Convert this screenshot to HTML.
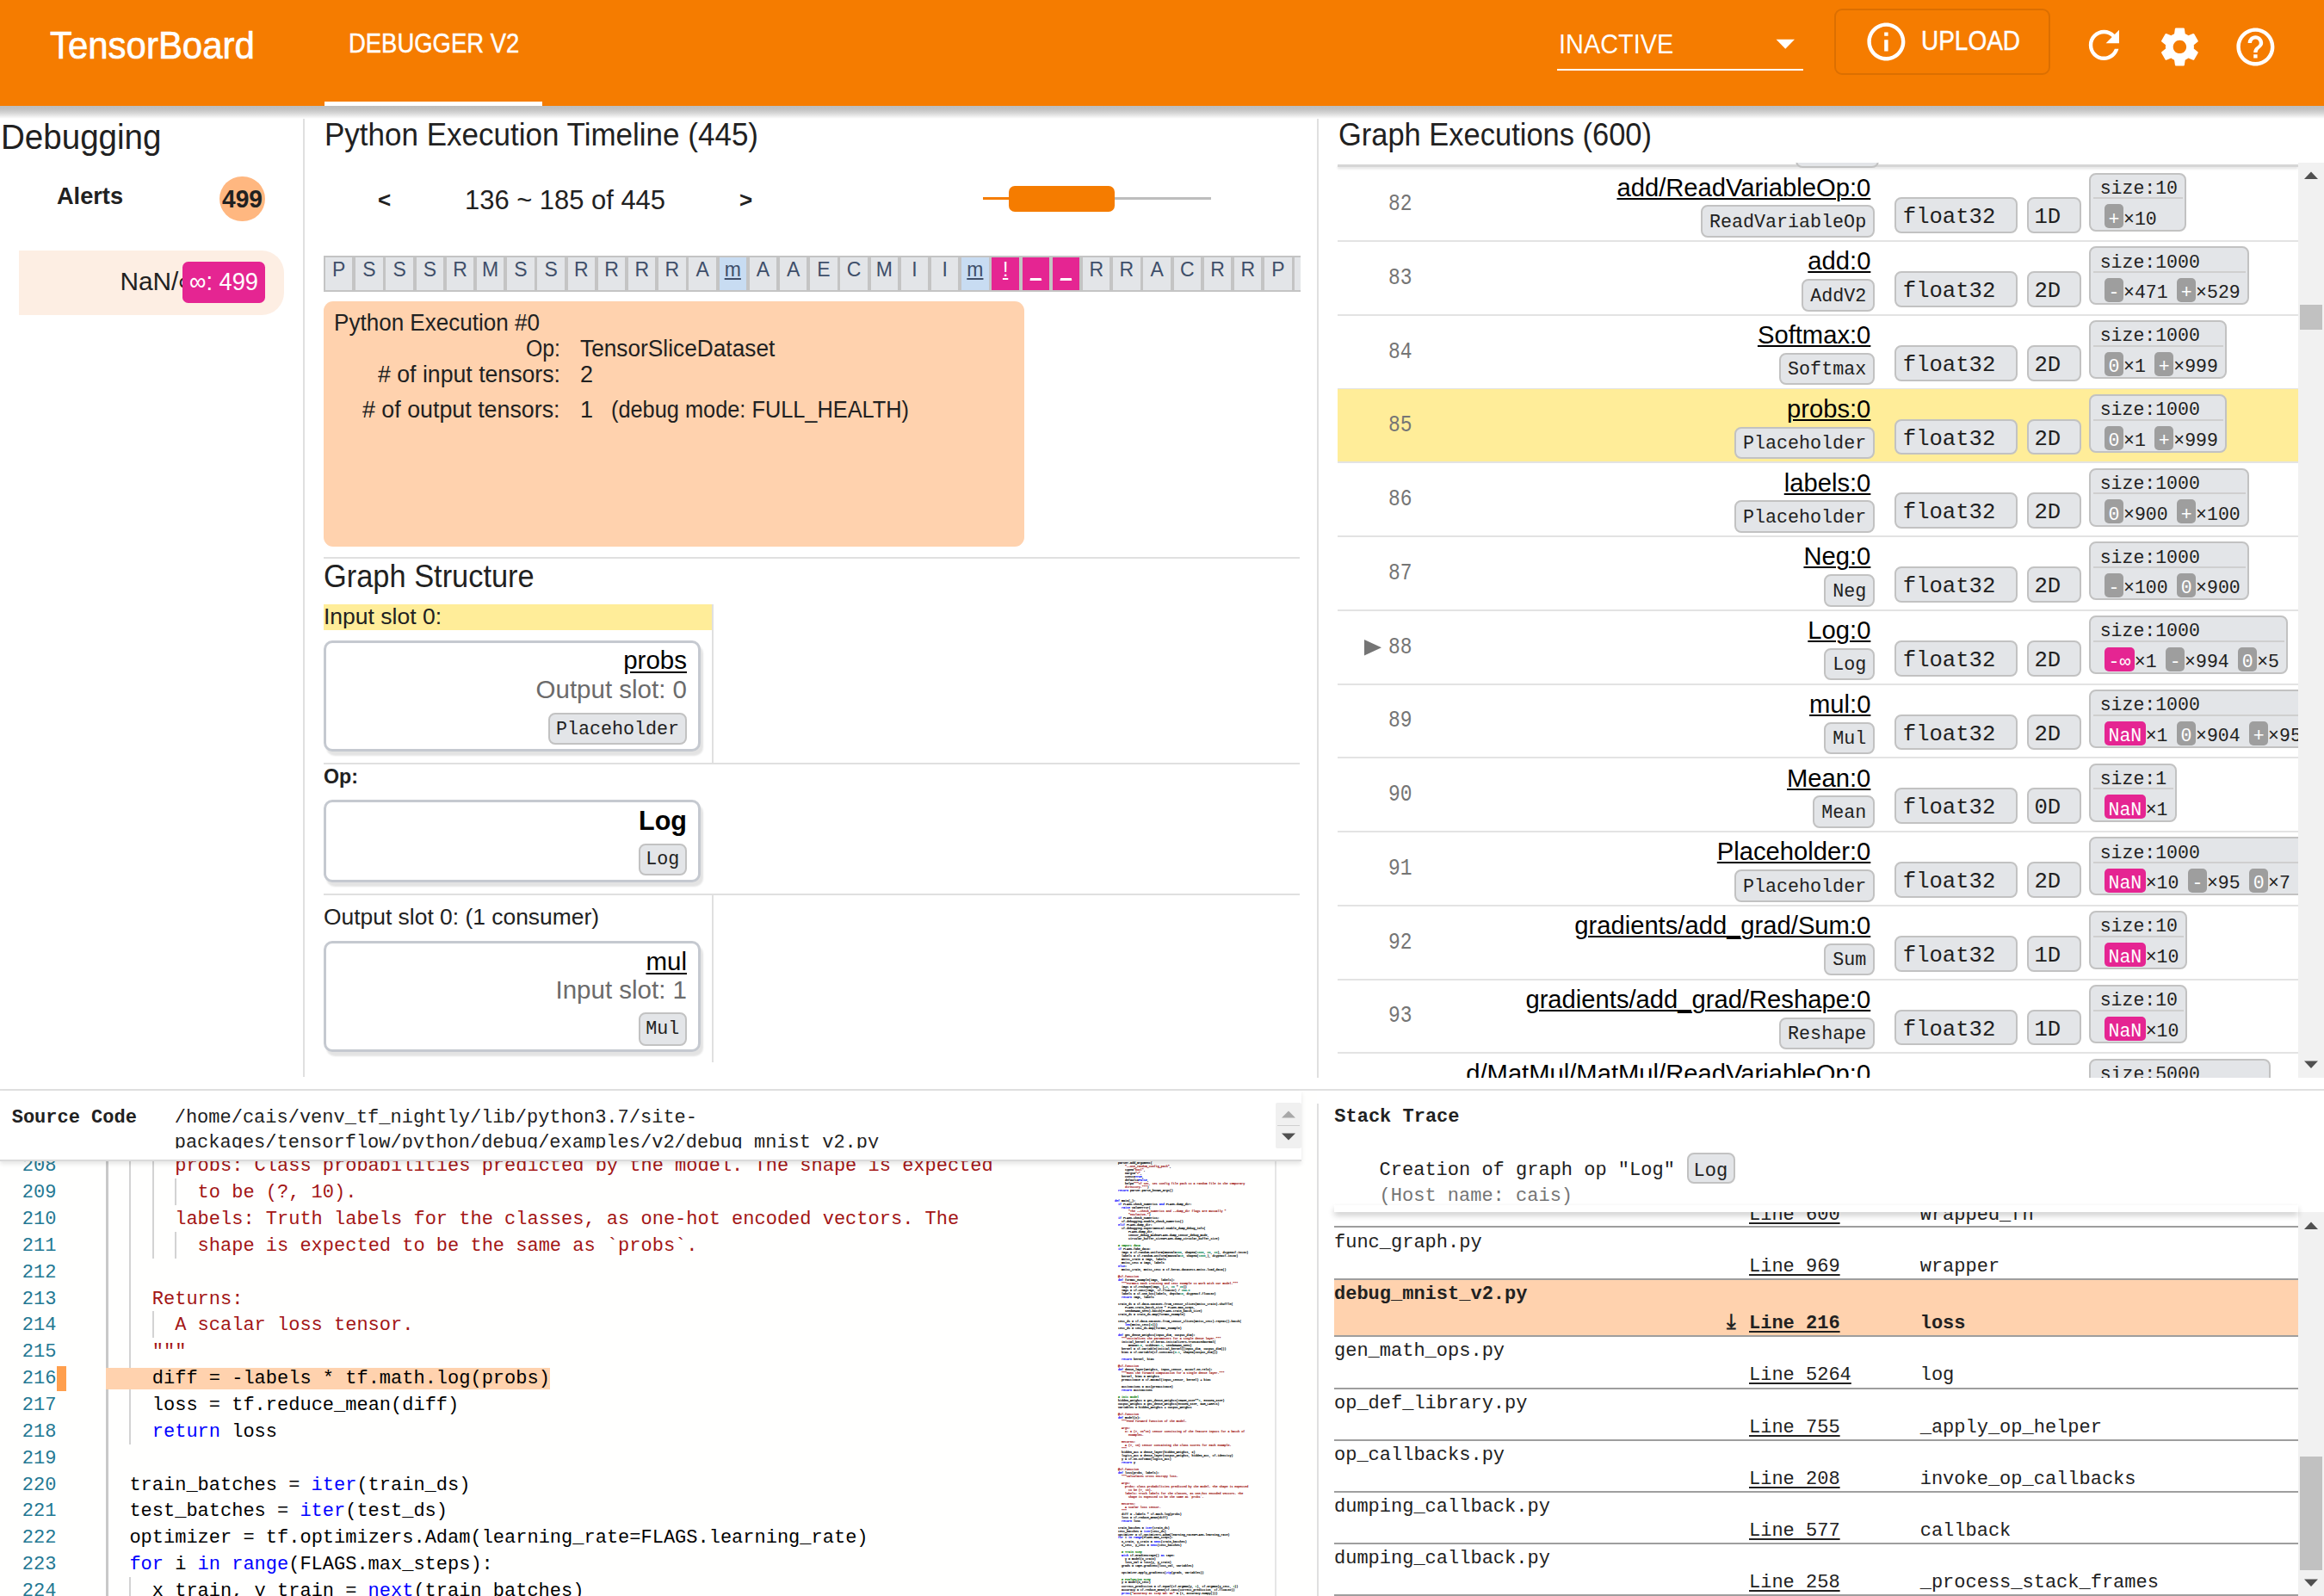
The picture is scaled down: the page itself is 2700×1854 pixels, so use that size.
<!DOCTYPE html><html><head><meta charset="utf-8"><style>
*{box-sizing:content-box}
html,body{margin:0;padding:0}
body{width:2700px;height:1854px;position:relative;overflow:hidden;background:#fff;font-family:"Liberation Sans",sans-serif}
.t{position:absolute;line-height:0;white-space:pre}
</style></head><body><div style="position:absolute;left:0.00px;top:123.00px;width:2700.00px;height:15.00px;background:linear-gradient(#bdbdbd 0%,#c2c2c2 25%,#d6d6d6 55%,#f6f6f6 90%,#fff 100%);z-index:2"></div>
<div style="position:absolute;left:0.00px;top:0.00px;width:2700.00px;height:123.00px;background:#f57c00;z-index:2"></div>
<div style="position:absolute;left:0;top:0;width:2700px;height:123px;z-index:3">
<div class="t" style="left:57.90px;top:51.57px;font-size:44.8px;font-family:'Liberation Sans',sans-serif;font-weight:400;color:#fff;transform:scaleX(0.9362);transform-origin:0 0;-webkit-text-stroke:0.7px #fff;">TensorBoard</div>
<div class="t" style="left:404.60px;top:51.28px;font-size:31.2px;font-family:'Liberation Sans',sans-serif;font-weight:400;color:#fff;transform:scaleX(0.8798);transform-origin:0 0;-webkit-text-stroke:0.45px #fff;">DEBUGGER V2</div>
<div style="position:absolute;left:377.00px;top:118.00px;width:253.00px;height:5.00px;background:#fff;"></div>
<div class="t" style="left:1810.70px;top:51.08px;font-size:31.5px;font-family:'Liberation Sans',sans-serif;font-weight:400;color:#fff;transform:scaleX(0.9169);transform-origin:0 0;">INACTIVE</div>
<svg style="position:absolute;left:2063px;top:45px" width="24" height="13"><polygon points="0.5,0.8 22,0.8 11.25,11.8" fill="#fff"/></svg>
<div style="position:absolute;left:1809.00px;top:80.00px;width:286.00px;height:2.00px;background:#fff;"></div>
<div style="position:absolute;left:2130.5px;top:10.3px;width:247.7px;height:73px;border:2px solid rgba(0,0,0,.1);border-radius:9px"></div>
<svg style="position:absolute;left:2164.60px;top:21.90px" width="52.8" height="52.8" viewBox="0 0 24 24"><path fill="#fff" d="M11 7h2v2h-2zm0 4h2v6h-2zm1-9C6.48 2 2 6.48 2 12s4.48 10 10 10 10-4.48 10-10S17.52 2 12 2zm0 18c-4.41 0-8-3.59-8-8s3.59-8 8-8 8 3.59 8 8-3.59 8-8 8z"/></svg>
<div class="t" style="left:2231.70px;top:48.15px;font-size:31px;font-family:'Liberation Sans',sans-serif;font-weight:400;color:#fff;transform:scaleX(0.9021);transform-origin:0 0;-webkit-text-stroke:0.45px #fff;">UPLOAD</div>
<svg style="position:absolute;left:2418.30px;top:26.20px" width="52.8" height="52.8" viewBox="0 0 24 24"><path fill="#fff" d="M17.65 6.35C16.2 4.9 14.21 4 12 4c-4.42 0-7.99 3.58-7.99 8s3.57 8 7.99 8c3.73 0 6.84-2.55 7.73-6h-2.08c-.82 2.33-3.04 4-5.65 4-3.31 0-6-2.69-6-6s2.69-6 6-6c1.66 0 3.14.69 4.22 1.78L13 11h7V4l-2.35 2.35z"/></svg>
<svg style="position:absolute;left:2506.10px;top:27.80px" width="52.8" height="52.8" viewBox="0 0 24 24"><path fill="#fff" d="M19.43 12.98c.04-.32.07-.64.07-.98s-.03-.66-.07-.98l2.11-1.65c.19-.15.24-.42.12-.64l-2-3.46c-.12-.22-.39-.3-.61-.22l-2.49 1c-.52-.4-1.08-.73-1.69-.98l-.38-2.65C14.46 2.18 14.25 2 14 2h-4c-.25 0-.46.18-.49.42l-.38 2.65c-.61.25-1.17.59-1.69.98l-2.49-1c-.23-.09-.49 0-.61.22l-2 3.46c-.13.22-.07.49.12.64l2.11 1.65c-.04.32-.07.65-.07.98s.03.66.07.98l-2.11 1.65c-.19.15-.24.42-.12.64l2 3.46c.12.22.39.3.61.22l2.49-1c.52.4 1.08.73 1.69.98l.38 2.65c.03.24.24.42.49.42h4c.25 0 .46-.18.49-.42l.38-2.65c.61-.25 1.17-.59 1.69-.98l2.49 1c.23.09.49 0 .61-.22l2-3.46c.12-.22.07-.49-.12-.64l-2.11-1.65zM12 15.5c-1.93 0-3.5-1.57-3.5-3.5s1.57-3.5 3.5-3.5 3.5 1.57 3.5 3.5-1.57 3.5-3.5 3.5z"/></svg>
<svg style="position:absolute;left:2593.90px;top:27.80px" width="52.8" height="52.8" viewBox="0 0 24 24"><path fill="#fff" d="M11 18h2v-2h-2v2zm1-16C6.48 2 2 6.48 2 12s4.48 10 10 10 10-4.48 10-10S17.52 2 12 2zm0 18c-4.41 0-8-3.59-8-8s3.59-8 8-8 8 3.59 8 8-3.59 8-8 8zm0-14c-2.21 0-4 1.79-4 4h2c0-1.1.9-2 2-2s2 .9 2 2c0 2-3 1.75-3 5h2c0-2.25 3-2.5 3-5 0-2.21-1.79-4-4-4z"/></svg>
</div>
<div style="position:absolute;left:352.00px;top:136.00px;width:2.00px;height:1115.00px;background:#e0e0e0;"></div>
<div style="position:absolute;left:1530.00px;top:136.00px;width:2.00px;height:1115.50px;background:#e0e0e0;"></div>
<div style="position:absolute;left:0.00px;top:1265.00px;width:2700.00px;height:2.00px;background:#e0e0e0;"></div>
<div style="position:absolute;left:1530.00px;top:1281.50px;width:2.00px;height:572.50px;background:#e0e0e0;"></div>
<div class="t" style="left:0.80px;top:159.33px;font-size:40px;font-family:'Liberation Sans',sans-serif;font-weight:400;color:#212121;transform:scaleX(0.9638);transform-origin:0 0;">Debugging</div>
<div class="t" style="left:65.80px;top:228.06px;font-size:27.8px;font-family:'Liberation Sans',sans-serif;font-weight:700;color:#212121;transform:scaleX(0.9772);transform-origin:0 0;">Alerts</div>
<div style="position:absolute;left:255.3px;top:204.7px;width:52.6px;height:52.6px;border-radius:50%;background:#ffb780"></div>
<div class="t" style="left:258.10px;top:230.95px;font-size:29px;font-family:'Liberation Sans',sans-serif;font-weight:700;color:#212121;transform:scaleX(0.9714);transform-origin:0 0;">499</div>
<div style="position:absolute;left:22.00px;top:291.00px;width:308.00px;height:74.60px;background:#fdeee3;border-radius:0 26px 26px 0"></div>
<div class="t" style="left:139.50px;top:327.17px;font-size:29.8px;font-family:'Liberation Sans',sans-serif;font-weight:400;color:#212121;">NaN/∞</div>
<div style="position:absolute;left:212.00px;top:304.00px;width:96.00px;height:47.60px;background:#e52592;border-radius:6.6px"></div>
<div class="t" style="left:220.00px;top:327.17px;font-size:29.8px;font-family:'Liberation Sans',sans-serif;font-weight:400;color:#fff;transform:scaleX(0.9140);transform-origin:0 0;">∞: 499</div>
<div class="t" style="left:376.50px;top:156.72px;font-size:36px;font-family:'Liberation Sans',sans-serif;font-weight:400;color:#212121;transform:scaleX(0.9725);transform-origin:0 0;">Python Execution Timeline (445)</div>
<div class="t" style="left:439.00px;top:231.59px;font-size:26px;font-family:'Liberation Sans',sans-serif;font-weight:700;color:#212121;">&lt;</div>
<div class="t" style="left:540.00px;top:232.03px;font-size:30.5px;font-family:'Liberation Sans',sans-serif;font-weight:400;color:#212121;transform:scaleX(1.0139);transform-origin:0 0;">136 ~ 185 of 445</div>
<div class="t" style="left:859.00px;top:231.59px;font-size:26px;font-family:'Liberation Sans',sans-serif;font-weight:700;color:#212121;">&gt;</div>
<div style="position:absolute;left:1142.00px;top:229.20px;width:265.00px;height:3.20px;background:#bdbdbd;"></div>
<div style="position:absolute;left:1142.00px;top:229.20px;width:33.00px;height:3.20px;background:#f57c00;"></div>
<div style="position:absolute;left:1172.00px;top:215.75px;width:122.50px;height:30.00px;background:#f57c00;border-radius:7px"></div>
<div style="position:absolute;left:376px;top:297px;width:1135px;height:42px;overflow:hidden;background:#c4c4c4">
<div style="position:absolute;left:1.90px;top:1.9px;width:31.6px;height:38px;background:#e3e5e8"></div>
<div class="t" style="left:1.90px;width:31.6px;text-align:center;top:16.03px;font-size:23px;color:#3f4f6a;">P</div>
<div style="position:absolute;left:37.10px;top:1.9px;width:31.6px;height:38px;background:#e3e5e8"></div>
<div class="t" style="left:37.10px;width:31.6px;text-align:center;top:16.03px;font-size:23px;color:#3f4f6a;">S</div>
<div style="position:absolute;left:72.30px;top:1.9px;width:31.6px;height:38px;background:#e3e5e8"></div>
<div class="t" style="left:72.30px;width:31.6px;text-align:center;top:16.03px;font-size:23px;color:#3f4f6a;">S</div>
<div style="position:absolute;left:107.50px;top:1.9px;width:31.6px;height:38px;background:#e3e5e8"></div>
<div class="t" style="left:107.50px;width:31.6px;text-align:center;top:16.03px;font-size:23px;color:#3f4f6a;">S</div>
<div style="position:absolute;left:142.70px;top:1.9px;width:31.6px;height:38px;background:#e3e5e8"></div>
<div class="t" style="left:142.70px;width:31.6px;text-align:center;top:16.03px;font-size:23px;color:#3f4f6a;">R</div>
<div style="position:absolute;left:177.90px;top:1.9px;width:31.6px;height:38px;background:#e3e5e8"></div>
<div class="t" style="left:177.90px;width:31.6px;text-align:center;top:16.03px;font-size:23px;color:#3f4f6a;">M</div>
<div style="position:absolute;left:213.10px;top:1.9px;width:31.6px;height:38px;background:#e3e5e8"></div>
<div class="t" style="left:213.10px;width:31.6px;text-align:center;top:16.03px;font-size:23px;color:#3f4f6a;">S</div>
<div style="position:absolute;left:248.30px;top:1.9px;width:31.6px;height:38px;background:#e3e5e8"></div>
<div class="t" style="left:248.30px;width:31.6px;text-align:center;top:16.03px;font-size:23px;color:#3f4f6a;">S</div>
<div style="position:absolute;left:283.50px;top:1.9px;width:31.6px;height:38px;background:#e3e5e8"></div>
<div class="t" style="left:283.50px;width:31.6px;text-align:center;top:16.03px;font-size:23px;color:#3f4f6a;">R</div>
<div style="position:absolute;left:318.70px;top:1.9px;width:31.6px;height:38px;background:#e3e5e8"></div>
<div class="t" style="left:318.70px;width:31.6px;text-align:center;top:16.03px;font-size:23px;color:#3f4f6a;">R</div>
<div style="position:absolute;left:353.90px;top:1.9px;width:31.6px;height:38px;background:#e3e5e8"></div>
<div class="t" style="left:353.90px;width:31.6px;text-align:center;top:16.03px;font-size:23px;color:#3f4f6a;">R</div>
<div style="position:absolute;left:389.10px;top:1.9px;width:31.6px;height:38px;background:#e3e5e8"></div>
<div class="t" style="left:389.10px;width:31.6px;text-align:center;top:16.03px;font-size:23px;color:#3f4f6a;">R</div>
<div style="position:absolute;left:424.30px;top:1.9px;width:31.6px;height:38px;background:#e3e5e8"></div>
<div class="t" style="left:424.30px;width:31.6px;text-align:center;top:16.03px;font-size:23px;color:#3f4f6a;">A</div>
<div style="position:absolute;left:459.50px;top:1.9px;width:31.6px;height:38px;background:#c8dcf2"></div>
<div class="t" style="left:459.50px;width:31.6px;text-align:center;top:16.03px;font-size:23px;color:#3f4f6a;text-decoration:underline;">m</div>
<div style="position:absolute;left:494.70px;top:1.9px;width:31.6px;height:38px;background:#e3e5e8"></div>
<div class="t" style="left:494.70px;width:31.6px;text-align:center;top:16.03px;font-size:23px;color:#3f4f6a;">A</div>
<div style="position:absolute;left:529.90px;top:1.9px;width:31.6px;height:38px;background:#e3e5e8"></div>
<div class="t" style="left:529.90px;width:31.6px;text-align:center;top:16.03px;font-size:23px;color:#3f4f6a;">A</div>
<div style="position:absolute;left:565.10px;top:1.9px;width:31.6px;height:38px;background:#e3e5e8"></div>
<div class="t" style="left:565.10px;width:31.6px;text-align:center;top:16.03px;font-size:23px;color:#3f4f6a;">E</div>
<div style="position:absolute;left:600.30px;top:1.9px;width:31.6px;height:38px;background:#e3e5e8"></div>
<div class="t" style="left:600.30px;width:31.6px;text-align:center;top:16.03px;font-size:23px;color:#3f4f6a;">C</div>
<div style="position:absolute;left:635.50px;top:1.9px;width:31.6px;height:38px;background:#e3e5e8"></div>
<div class="t" style="left:635.50px;width:31.6px;text-align:center;top:16.03px;font-size:23px;color:#3f4f6a;">M</div>
<div style="position:absolute;left:670.70px;top:1.9px;width:31.6px;height:38px;background:#e3e5e8"></div>
<div class="t" style="left:670.70px;width:31.6px;text-align:center;top:16.03px;font-size:23px;color:#3f4f6a;">I</div>
<div style="position:absolute;left:705.90px;top:1.9px;width:31.6px;height:38px;background:#e3e5e8"></div>
<div class="t" style="left:705.90px;width:31.6px;text-align:center;top:16.03px;font-size:23px;color:#3f4f6a;">I</div>
<div style="position:absolute;left:741.10px;top:1.9px;width:31.6px;height:38px;background:#c8dcf2"></div>
<div class="t" style="left:741.10px;width:31.6px;text-align:center;top:16.03px;font-size:23px;color:#3f4f6a;text-decoration:underline;">m</div>
<div style="position:absolute;left:776.30px;top:1.9px;width:31.6px;height:38px;background:#e52592"></div>
<div class="t" style="left:776.30px;width:31.6px;text-align:center;top:16.03px;font-size:23px;color:#fff;text-decoration:underline;">!</div>
<div style="position:absolute;left:811.50px;top:1.9px;width:31.6px;height:38px;background:#e52592"></div>
<div class="t" style="left:811.50px;width:31.6px;text-align:center;top:16.03px;font-size:23px;color:#fff;text-decoration:underline;">_</div>
<div style="position:absolute;left:846.70px;top:1.9px;width:31.6px;height:38px;background:#e52592"></div>
<div class="t" style="left:846.70px;width:31.6px;text-align:center;top:16.03px;font-size:23px;color:#fff;text-decoration:underline;">_</div>
<div style="position:absolute;left:881.90px;top:1.9px;width:31.6px;height:38px;background:#e3e5e8"></div>
<div class="t" style="left:881.90px;width:31.6px;text-align:center;top:16.03px;font-size:23px;color:#3f4f6a;">R</div>
<div style="position:absolute;left:917.10px;top:1.9px;width:31.6px;height:38px;background:#e3e5e8"></div>
<div class="t" style="left:917.10px;width:31.6px;text-align:center;top:16.03px;font-size:23px;color:#3f4f6a;">R</div>
<div style="position:absolute;left:952.30px;top:1.9px;width:31.6px;height:38px;background:#e3e5e8"></div>
<div class="t" style="left:952.30px;width:31.6px;text-align:center;top:16.03px;font-size:23px;color:#3f4f6a;">A</div>
<div style="position:absolute;left:987.50px;top:1.9px;width:31.6px;height:38px;background:#e3e5e8"></div>
<div class="t" style="left:987.50px;width:31.6px;text-align:center;top:16.03px;font-size:23px;color:#3f4f6a;">C</div>
<div style="position:absolute;left:1022.70px;top:1.9px;width:31.6px;height:38px;background:#e3e5e8"></div>
<div class="t" style="left:1022.70px;width:31.6px;text-align:center;top:16.03px;font-size:23px;color:#3f4f6a;">R</div>
<div style="position:absolute;left:1057.90px;top:1.9px;width:31.6px;height:38px;background:#e3e5e8"></div>
<div class="t" style="left:1057.90px;width:31.6px;text-align:center;top:16.03px;font-size:23px;color:#3f4f6a;">R</div>
<div style="position:absolute;left:1093.10px;top:1.9px;width:31.6px;height:38px;background:#e3e5e8"></div>
<div class="t" style="left:1093.10px;width:31.6px;text-align:center;top:16.03px;font-size:23px;color:#3f4f6a;">P</div>
<div style="position:absolute;left:1128.30px;top:1.9px;width:31.6px;height:38px;background:#e3e5e8"></div>
<div class="t" style="left:1128.30px;width:31.6px;text-align:center;top:16.03px;font-size:23px;color:#3f4f6a;">R</div>
</div>
<div style="position:absolute;left:376.00px;top:350.00px;width:814.00px;height:285.00px;background:#ffd2ae;border-radius:11px"></div>
<div class="t" style="left:388.00px;top:375.04px;font-size:27px;font-family:'Liberation Sans',sans-serif;font-weight:400;color:#212121;transform:scaleX(0.9650);transform-origin:0 0;">Python Execution #0</div>
<div class="t" style="left:610.50px;top:404.64px;font-size:27px;font-family:'Liberation Sans',sans-serif;font-weight:400;color:#212121;transform:scaleX(0.9191);transform-origin:0 0;">Op:</div>
<div class="t" style="left:674.00px;top:404.64px;font-size:27px;font-family:'Liberation Sans',sans-serif;font-weight:400;color:#212121;transform:scaleX(0.9729);transform-origin:0 0;">TensorSliceDataset</div>
<div class="t" style="left:438.50px;top:434.64px;font-size:27px;font-family:'Liberation Sans',sans-serif;font-weight:400;color:#212121;transform:scaleX(0.9877);transform-origin:0 0;"># of input tensors:</div>
<div class="t" style="left:674.00px;top:434.64px;font-size:27px;font-family:'Liberation Sans',sans-serif;font-weight:400;color:#212121;">2</div>
<div class="t" style="left:421.00px;top:475.64px;font-size:27px;font-family:'Liberation Sans',sans-serif;font-weight:400;color:#212121;transform:scaleX(0.9929);transform-origin:0 0;"># of output tensors:</div>
<div class="t" style="left:674.00px;top:475.64px;font-size:27px;font-family:'Liberation Sans',sans-serif;font-weight:400;color:#212121;">1</div>
<div class="t" style="left:710.00px;top:475.64px;font-size:27px;font-family:'Liberation Sans',sans-serif;font-weight:400;color:#212121;transform:scaleX(0.9385);transform-origin:0 0;">(debug mode: FULL_HEALTH)</div>
<div style="position:absolute;left:376.00px;top:647.00px;width:1134.00px;height:2.00px;background:#e0e0e0;"></div>
<div class="t" style="left:376.00px;top:670.41px;font-size:36.3px;font-family:'Liberation Sans',sans-serif;font-weight:400;color:#212121;transform:scaleX(0.9475);transform-origin:0 0;">Graph Structure</div>
<div style="position:absolute;left:376.00px;top:702.00px;width:451.00px;height:29.60px;background:#ffed99;"></div>
<div class="t" style="left:376.00px;top:715.99px;font-size:26px;font-family:'Liberation Sans',sans-serif;font-weight:400;color:#212121;transform:scaleX(1.0192);transform-origin:0 0;">Input slot 0:</div>
<div style="position:absolute;left:827.00px;top:702.00px;width:2.00px;height:185.00px;background:#e0e0e0;"></div>
<div style="position:absolute;left:376px;top:743.6px;width:432px;height:123.4px;border:3.5px solid #c5c9d0;border-radius:10px;background:#fff;box-shadow:3px 5px 2px rgba(0,0,0,.11)"></div>
<div class="t" style="left:724.21px;top:766.77px;font-size:29.5px;font-family:'Liberation Sans',sans-serif;font-weight:400;color:#000;text-decoration:underline;text-underline-offset:3px;">probs</div>
<div class="t" style="left:622.54px;top:801.37px;font-size:29.5px;font-family:'Liberation Sans',sans-serif;font-weight:400;color:#6b6b6b;">Output slot: 0</div>
<div style="position:absolute;left:637.00px;top:828.00px;width:157.00px;height:33.00px;background:#e3e5e8;border:2px solid #c2c2c2;border-radius:8px"></div>
<div class="t" style="left:645.88px;top:848.23px;font-size:21.7px;font-family:'Liberation Mono',monospace;font-weight:400;color:#212121;">Placeholder</div>
<div style="position:absolute;left:376.00px;top:886.00px;width:1134.00px;height:2.00px;background:#e0e0e0;"></div>
<div class="t" style="left:376.00px;top:902.31px;font-size:24.5px;font-family:'Liberation Sans',sans-serif;font-weight:700;color:#212121;transform:scaleX(0.9483);transform-origin:0 0;">Op:</div>
<div style="position:absolute;left:376px;top:929px;width:432px;height:89.8px;border:3.5px solid #c5c9d0;border-radius:10px;background:#fff;box-shadow:3px 5px 2px rgba(0,0,0,.11)"></div>
<div class="t" style="left:742.11px;top:953.43px;font-size:30.5px;font-family:'Liberation Sans',sans-serif;font-weight:700;color:#000;">Log</div>
<div style="position:absolute;left:741.70px;top:979.50px;width:52.30px;height:33.50px;background:#e3e5e8;border:2px solid #c2c2c2;border-radius:8px"></div>
<div class="t" style="left:750.32px;top:999.23px;font-size:21.7px;font-family:'Liberation Mono',monospace;font-weight:400;color:#212121;">Log</div>
<div style="position:absolute;left:376.00px;top:1038.00px;width:1134.00px;height:2.00px;background:#e0e0e0;"></div>
<div class="t" style="left:376.00px;top:1064.81px;font-size:26.5px;font-family:'Liberation Sans',sans-serif;font-weight:400;color:#212121;transform:scaleX(0.9966);transform-origin:0 0;">Output slot 0: (1 consumer)</div>
<div style="position:absolute;left:827.00px;top:1040.00px;width:2.00px;height:194.00px;background:#e0e0e0;"></div>
<div style="position:absolute;left:376px;top:1092.5px;width:432px;height:123.1px;border:3.5px solid #c5c9d0;border-radius:10px;background:#fff;box-shadow:3px 5px 2px rgba(0,0,0,.11)"></div>
<div class="t" style="left:750.47px;top:1116.77px;font-size:29.5px;font-family:'Liberation Sans',sans-serif;font-weight:400;color:#000;text-decoration:underline;text-underline-offset:3px;">mul</div>
<div class="t" style="left:645.49px;top:1150.47px;font-size:29.5px;font-family:'Liberation Sans',sans-serif;font-weight:400;color:#6b6b6b;">Input slot: 1</div>
<div style="position:absolute;left:741.70px;top:1176.00px;width:52.30px;height:34.50px;background:#e3e5e8;border:2px solid #c2c2c2;border-radius:8px"></div>
<div class="t" style="left:750.32px;top:1196.23px;font-size:21.7px;font-family:'Liberation Mono',monospace;font-weight:400;color:#212121;">Mul</div>
<div class="t" style="left:1554.50px;top:156.72px;font-size:36px;font-family:'Liberation Sans',sans-serif;font-weight:400;color:#212121;transform:scaleX(0.9574);transform-origin:0 0;">Graph Executions (600)</div>
<div style="position:absolute;left:1532px;top:189px;width:1138px;height:1063px;overflow:hidden">
<div style="position:absolute;left:21.50px;top:1.50px;width:1116.50px;height:3.00px;background:#d6d6d6;box-shadow:0 2px 3px rgba(0,0,0,.12)"></div>
<div style="position:absolute;left:554.00px;top:-39.00px;width:92.50px;height:41.00px;background:#e3e5e8;border:2px solid #c2c2c2;border-radius:8px"></div>
<div style="position:absolute;left:21.50px;top:90.00px;width:1116.50px;height:2.00px;background:#e3e3e3;"></div>
<div class="t" style="left:81.00px;top:48.07px;font-size:27px;font-family:'Liberation Mono',monospace;font-weight:400;color:#757575;transform:scaleX(0.8486);transform-origin:0 0;">82</div>
<div style="position:absolute;left:171px;top:5.25px;width:477px;height:85.75px;overflow:hidden">
<div class="t" style="left:175.49px;top:23.48px;font-size:29.2px;font-family:'Liberation Sans',sans-serif;font-weight:400;color:#000;text-decoration:underline;text-decoration-thickness:2px;text-underline-offset:2px;">add/ReadVariableOp:0</div>
</div>
<div style="position:absolute;left:443.69px;top:49.25px;width:198.81px;height:33.50px;background:#e3e5e8;border:2px solid #c2c2c2;border-radius:8px"></div>
<div class="t" style="left:453.94px;top:69.98px;font-size:21.7px;font-family:'Liberation Mono',monospace;font-weight:400;color:#212121;">ReadVariableOp</div>
<div style="position:absolute;left:669.40px;top:40.45px;width:138.90px;height:37.70px;background:#e3e5e8;border:2px solid #c2c2c2;border-radius:8px"></div>
<div class="t" style="left:678.80px;top:64.44px;font-size:25.6px;font-family:'Liberation Mono',monospace;font-weight:400;color:#212121;">float32</div>
<div style="position:absolute;left:822.60px;top:40.45px;width:59.60px;height:37.70px;background:#e3e5e8;border:2px solid #c2c2c2;border-radius:8px"></div>
<div class="t" style="left:831.40px;top:64.44px;font-size:25.6px;font-family:'Liberation Mono',monospace;font-weight:400;color:#212121;">1D</div>
<div style="position:absolute;left:895.40px;top:11.50px;width:112.61px;height:68.00px;background:#e3e5e8;border:2px solid #c2c2c2;border-radius:8px;box-sizing:border-box"></div>
<div class="t" style="left:907.70px;top:29.78px;font-size:21.5px;font-family:'Liberation Mono',monospace;font-weight:400;color:#212121;">size:10</div>
<div style="position:absolute;left:900.00px;top:40.25px;width:104.01px;height:2.00px;background:#cfcfcf;"></div>
<div style="position:absolute;left:913.00px;top:48.25px;width:22.00px;height:28.00px;background:#9e9e9e;border-radius:5px"></div>
<div class="t" style="left:917.55px;top:65.53px;font-size:21.5px;font-family:'Liberation Mono',monospace;font-weight:400;color:#fff;">+</div>
<div class="t" style="left:935.00px;top:65.53px;font-size:21.5px;font-family:'Liberation Mono',monospace;font-weight:400;color:#212121;">×10</div>
<div style="position:absolute;left:21.50px;top:175.75px;width:1116.50px;height:2.00px;background:#e3e3e3;"></div>
<div class="t" style="left:81.00px;top:133.82px;font-size:27px;font-family:'Liberation Mono',monospace;font-weight:400;color:#757575;transform:scaleX(0.8486);transform-origin:0 0;">83</div>
<div style="position:absolute;left:171px;top:91.00px;width:477px;height:85.75px;overflow:hidden">
<div class="t" style="left:397.33px;top:23.48px;font-size:29.2px;font-family:'Liberation Sans',sans-serif;font-weight:400;color:#000;text-decoration:underline;text-decoration-thickness:2px;text-underline-offset:2px;">add:0</div>
</div>
<div style="position:absolute;left:560.89px;top:135.00px;width:81.61px;height:33.50px;background:#e3e5e8;border:2px solid #c2c2c2;border-radius:8px"></div>
<div class="t" style="left:571.14px;top:155.73px;font-size:21.7px;font-family:'Liberation Mono',monospace;font-weight:400;color:#212121;">AddV2</div>
<div style="position:absolute;left:669.40px;top:126.20px;width:138.90px;height:37.70px;background:#e3e5e8;border:2px solid #c2c2c2;border-radius:8px"></div>
<div class="t" style="left:678.80px;top:150.19px;font-size:25.6px;font-family:'Liberation Mono',monospace;font-weight:400;color:#212121;">float32</div>
<div style="position:absolute;left:822.60px;top:126.20px;width:59.60px;height:37.70px;background:#e3e5e8;border:2px solid #c2c2c2;border-radius:8px"></div>
<div class="t" style="left:831.40px;top:150.19px;font-size:25.6px;font-family:'Liberation Mono',monospace;font-weight:400;color:#212121;">2D</div>
<div style="position:absolute;left:895.40px;top:97.25px;width:185.32px;height:68.00px;background:#e3e5e8;border:2px solid #c2c2c2;border-radius:8px;box-sizing:border-box"></div>
<div class="t" style="left:907.70px;top:115.53px;font-size:21.5px;font-family:'Liberation Mono',monospace;font-weight:400;color:#212121;">size:1000</div>
<div style="position:absolute;left:900.00px;top:126.00px;width:176.72px;height:2.00px;background:#cfcfcf;"></div>
<div style="position:absolute;left:913.00px;top:134.00px;width:22.00px;height:28.00px;background:#9e9e9e;border-radius:5px"></div>
<div class="t" style="left:917.55px;top:151.28px;font-size:21.5px;font-family:'Liberation Mono',monospace;font-weight:400;color:#fff;">-</div>
<div class="t" style="left:935.00px;top:151.28px;font-size:21.5px;font-family:'Liberation Mono',monospace;font-weight:400;color:#212121;">×471</div>
<div style="position:absolute;left:997.11px;top:134.00px;width:22.00px;height:28.00px;background:#9e9e9e;border-radius:5px"></div>
<div class="t" style="left:1001.66px;top:151.28px;font-size:21.5px;font-family:'Liberation Mono',monospace;font-weight:400;color:#fff;">+</div>
<div class="t" style="left:1019.11px;top:151.28px;font-size:21.5px;font-family:'Liberation Mono',monospace;font-weight:400;color:#212121;">×529</div>
<div style="position:absolute;left:21.50px;top:261.50px;width:1116.50px;height:2.00px;background:#e3e3e3;"></div>
<div class="t" style="left:81.00px;top:219.57px;font-size:27px;font-family:'Liberation Mono',monospace;font-weight:400;color:#757575;transform:scaleX(0.8486);transform-origin:0 0;">84</div>
<div style="position:absolute;left:171px;top:176.75px;width:477px;height:85.75px;overflow:hidden">
<div class="t" style="left:338.94px;top:23.48px;font-size:29.2px;font-family:'Liberation Sans',sans-serif;font-weight:400;color:#000;text-decoration:underline;text-decoration-thickness:2px;text-underline-offset:2px;">Softmax:0</div>
</div>
<div style="position:absolute;left:534.85px;top:220.75px;width:107.65px;height:33.50px;background:#e3e5e8;border:2px solid #c2c2c2;border-radius:8px"></div>
<div class="t" style="left:545.10px;top:241.48px;font-size:21.7px;font-family:'Liberation Mono',monospace;font-weight:400;color:#212121;">Softmax</div>
<div style="position:absolute;left:669.40px;top:211.95px;width:138.90px;height:37.70px;background:#e3e5e8;border:2px solid #c2c2c2;border-radius:8px"></div>
<div class="t" style="left:678.80px;top:235.94px;font-size:25.6px;font-family:'Liberation Mono',monospace;font-weight:400;color:#212121;">float32</div>
<div style="position:absolute;left:822.60px;top:211.95px;width:59.60px;height:37.70px;background:#e3e5e8;border:2px solid #c2c2c2;border-radius:8px"></div>
<div class="t" style="left:831.40px;top:235.94px;font-size:25.6px;font-family:'Liberation Mono',monospace;font-weight:400;color:#212121;">2D</div>
<div style="position:absolute;left:895.40px;top:183.00px;width:159.51px;height:68.00px;background:#e3e5e8;border:2px solid #c2c2c2;border-radius:8px;box-sizing:border-box"></div>
<div class="t" style="left:907.70px;top:201.28px;font-size:21.5px;font-family:'Liberation Mono',monospace;font-weight:400;color:#212121;">size:1000</div>
<div style="position:absolute;left:900.00px;top:211.75px;width:150.91px;height:2.00px;background:#cfcfcf;"></div>
<div style="position:absolute;left:913.00px;top:219.75px;width:22.00px;height:28.00px;background:#9e9e9e;border-radius:5px"></div>
<div class="t" style="left:917.55px;top:237.03px;font-size:21.5px;font-family:'Liberation Mono',monospace;font-weight:400;color:#fff;">0</div>
<div class="t" style="left:935.00px;top:237.03px;font-size:21.5px;font-family:'Liberation Mono',monospace;font-weight:400;color:#212121;">×1</div>
<div style="position:absolute;left:971.30px;top:219.75px;width:22.00px;height:28.00px;background:#9e9e9e;border-radius:5px"></div>
<div class="t" style="left:975.85px;top:237.03px;font-size:21.5px;font-family:'Liberation Mono',monospace;font-weight:400;color:#fff;">+</div>
<div class="t" style="left:993.30px;top:237.03px;font-size:21.5px;font-family:'Liberation Mono',monospace;font-weight:400;color:#212121;">×999</div>
<div style="position:absolute;left:21.50px;top:262.50px;width:1116.50px;height:85.75px;background:#ffed99;"></div>
<div style="position:absolute;left:21.50px;top:347.25px;width:1116.50px;height:2.00px;background:#e3e3e3;"></div>
<div class="t" style="left:81.00px;top:305.32px;font-size:27px;font-family:'Liberation Mono',monospace;font-weight:400;color:#757575;transform:scaleX(0.8486);transform-origin:0 0;">85</div>
<div style="position:absolute;left:171px;top:262.50px;width:477px;height:85.75px;overflow:hidden">
<div class="t" style="left:373.00px;top:23.48px;font-size:29.2px;font-family:'Liberation Sans',sans-serif;font-weight:400;color:#000;text-decoration:underline;text-decoration-thickness:2px;text-underline-offset:2px;">probs:0</div>
</div>
<div style="position:absolute;left:482.76px;top:306.50px;width:159.74px;height:33.50px;background:#e3e5e8;border:2px solid #c2c2c2;border-radius:8px"></div>
<div class="t" style="left:493.01px;top:327.23px;font-size:21.7px;font-family:'Liberation Mono',monospace;font-weight:400;color:#212121;">Placeholder</div>
<div style="position:absolute;left:669.40px;top:297.70px;width:138.90px;height:37.70px;background:#e3e5e8;border:2px solid #c2c2c2;border-radius:8px"></div>
<div class="t" style="left:678.80px;top:321.69px;font-size:25.6px;font-family:'Liberation Mono',monospace;font-weight:400;color:#212121;">float32</div>
<div style="position:absolute;left:822.60px;top:297.70px;width:59.60px;height:37.70px;background:#e3e5e8;border:2px solid #c2c2c2;border-radius:8px"></div>
<div class="t" style="left:831.40px;top:321.69px;font-size:25.6px;font-family:'Liberation Mono',monospace;font-weight:400;color:#212121;">2D</div>
<div style="position:absolute;left:895.40px;top:268.75px;width:159.51px;height:68.00px;background:#e3e5e8;border:2px solid #c2c2c2;border-radius:8px;box-sizing:border-box"></div>
<div class="t" style="left:907.70px;top:287.03px;font-size:21.5px;font-family:'Liberation Mono',monospace;font-weight:400;color:#212121;">size:1000</div>
<div style="position:absolute;left:900.00px;top:297.50px;width:150.91px;height:2.00px;background:#cfcfcf;"></div>
<div style="position:absolute;left:913.00px;top:305.50px;width:22.00px;height:28.00px;background:#9e9e9e;border-radius:5px"></div>
<div class="t" style="left:917.55px;top:322.78px;font-size:21.5px;font-family:'Liberation Mono',monospace;font-weight:400;color:#fff;">0</div>
<div class="t" style="left:935.00px;top:322.78px;font-size:21.5px;font-family:'Liberation Mono',monospace;font-weight:400;color:#212121;">×1</div>
<div style="position:absolute;left:971.30px;top:305.50px;width:22.00px;height:28.00px;background:#9e9e9e;border-radius:5px"></div>
<div class="t" style="left:975.85px;top:322.78px;font-size:21.5px;font-family:'Liberation Mono',monospace;font-weight:400;color:#fff;">+</div>
<div class="t" style="left:993.30px;top:322.78px;font-size:21.5px;font-family:'Liberation Mono',monospace;font-weight:400;color:#212121;">×999</div>
<div style="position:absolute;left:21.50px;top:433.00px;width:1116.50px;height:2.00px;background:#e3e3e3;"></div>
<div class="t" style="left:81.00px;top:391.07px;font-size:27px;font-family:'Liberation Mono',monospace;font-weight:400;color:#757575;transform:scaleX(0.8486);transform-origin:0 0;">86</div>
<div style="position:absolute;left:171px;top:348.25px;width:477px;height:85.75px;overflow:hidden">
<div class="t" style="left:369.75px;top:23.48px;font-size:29.2px;font-family:'Liberation Sans',sans-serif;font-weight:400;color:#000;text-decoration:underline;text-decoration-thickness:2px;text-underline-offset:2px;">labels:0</div>
</div>
<div style="position:absolute;left:482.76px;top:392.25px;width:159.74px;height:33.50px;background:#e3e5e8;border:2px solid #c2c2c2;border-radius:8px"></div>
<div class="t" style="left:493.01px;top:412.98px;font-size:21.7px;font-family:'Liberation Mono',monospace;font-weight:400;color:#212121;">Placeholder</div>
<div style="position:absolute;left:669.40px;top:383.45px;width:138.90px;height:37.70px;background:#e3e5e8;border:2px solid #c2c2c2;border-radius:8px"></div>
<div class="t" style="left:678.80px;top:407.44px;font-size:25.6px;font-family:'Liberation Mono',monospace;font-weight:400;color:#212121;">float32</div>
<div style="position:absolute;left:822.60px;top:383.45px;width:59.60px;height:37.70px;background:#e3e5e8;border:2px solid #c2c2c2;border-radius:8px"></div>
<div class="t" style="left:831.40px;top:407.44px;font-size:25.6px;font-family:'Liberation Mono',monospace;font-weight:400;color:#212121;">2D</div>
<div style="position:absolute;left:895.40px;top:354.50px;width:185.32px;height:68.00px;background:#e3e5e8;border:2px solid #c2c2c2;border-radius:8px;box-sizing:border-box"></div>
<div class="t" style="left:907.70px;top:372.78px;font-size:21.5px;font-family:'Liberation Mono',monospace;font-weight:400;color:#212121;">size:1000</div>
<div style="position:absolute;left:900.00px;top:383.25px;width:176.72px;height:2.00px;background:#cfcfcf;"></div>
<div style="position:absolute;left:913.00px;top:391.25px;width:22.00px;height:28.00px;background:#9e9e9e;border-radius:5px"></div>
<div class="t" style="left:917.55px;top:408.53px;font-size:21.5px;font-family:'Liberation Mono',monospace;font-weight:400;color:#fff;">0</div>
<div class="t" style="left:935.00px;top:408.53px;font-size:21.5px;font-family:'Liberation Mono',monospace;font-weight:400;color:#212121;">×900</div>
<div style="position:absolute;left:997.11px;top:391.25px;width:22.00px;height:28.00px;background:#9e9e9e;border-radius:5px"></div>
<div class="t" style="left:1001.66px;top:408.53px;font-size:21.5px;font-family:'Liberation Mono',monospace;font-weight:400;color:#fff;">+</div>
<div class="t" style="left:1019.11px;top:408.53px;font-size:21.5px;font-family:'Liberation Mono',monospace;font-weight:400;color:#212121;">×100</div>
<div style="position:absolute;left:21.50px;top:518.75px;width:1116.50px;height:2.00px;background:#e3e3e3;"></div>
<div class="t" style="left:81.00px;top:476.82px;font-size:27px;font-family:'Liberation Mono',monospace;font-weight:400;color:#757575;transform:scaleX(0.8486);transform-origin:0 0;">87</div>
<div style="position:absolute;left:171px;top:434.00px;width:477px;height:85.75px;overflow:hidden">
<div class="t" style="left:392.48px;top:23.48px;font-size:29.2px;font-family:'Liberation Sans',sans-serif;font-weight:400;color:#000;text-decoration:underline;text-decoration-thickness:2px;text-underline-offset:2px;">Neg:0</div>
</div>
<div style="position:absolute;left:586.93px;top:478.00px;width:55.57px;height:33.50px;background:#e3e5e8;border:2px solid #c2c2c2;border-radius:8px"></div>
<div class="t" style="left:597.18px;top:498.73px;font-size:21.7px;font-family:'Liberation Mono',monospace;font-weight:400;color:#212121;">Neg</div>
<div style="position:absolute;left:669.40px;top:469.20px;width:138.90px;height:37.70px;background:#e3e5e8;border:2px solid #c2c2c2;border-radius:8px"></div>
<div class="t" style="left:678.80px;top:493.19px;font-size:25.6px;font-family:'Liberation Mono',monospace;font-weight:400;color:#212121;">float32</div>
<div style="position:absolute;left:822.60px;top:469.20px;width:59.60px;height:37.70px;background:#e3e5e8;border:2px solid #c2c2c2;border-radius:8px"></div>
<div class="t" style="left:831.40px;top:493.19px;font-size:25.6px;font-family:'Liberation Mono',monospace;font-weight:400;color:#212121;">2D</div>
<div style="position:absolute;left:895.40px;top:440.25px;width:185.32px;height:68.00px;background:#e3e5e8;border:2px solid #c2c2c2;border-radius:8px;box-sizing:border-box"></div>
<div class="t" style="left:907.70px;top:458.53px;font-size:21.5px;font-family:'Liberation Mono',monospace;font-weight:400;color:#212121;">size:1000</div>
<div style="position:absolute;left:900.00px;top:469.00px;width:176.72px;height:2.00px;background:#cfcfcf;"></div>
<div style="position:absolute;left:913.00px;top:477.00px;width:22.00px;height:28.00px;background:#9e9e9e;border-radius:5px"></div>
<div class="t" style="left:917.55px;top:494.28px;font-size:21.5px;font-family:'Liberation Mono',monospace;font-weight:400;color:#fff;">-</div>
<div class="t" style="left:935.00px;top:494.28px;font-size:21.5px;font-family:'Liberation Mono',monospace;font-weight:400;color:#212121;">×100</div>
<div style="position:absolute;left:997.11px;top:477.00px;width:22.00px;height:28.00px;background:#9e9e9e;border-radius:5px"></div>
<div class="t" style="left:1001.66px;top:494.28px;font-size:21.5px;font-family:'Liberation Mono',monospace;font-weight:400;color:#fff;">0</div>
<div class="t" style="left:1019.11px;top:494.28px;font-size:21.5px;font-family:'Liberation Mono',monospace;font-weight:400;color:#212121;">×900</div>
<div style="position:absolute;left:21.50px;top:604.50px;width:1116.50px;height:2.00px;background:#e3e3e3;"></div>
<svg style="position:absolute;left:53px;top:553.75px" width="20" height="19"><polygon points="0,0 20,9.25 0,18.5" fill="#757575"/></svg>
<div class="t" style="left:81.00px;top:562.57px;font-size:27px;font-family:'Liberation Mono',monospace;font-weight:400;color:#757575;transform:scaleX(0.8486);transform-origin:0 0;">88</div>
<div style="position:absolute;left:171px;top:519.75px;width:477px;height:85.75px;overflow:hidden">
<div class="t" style="left:397.33px;top:23.48px;font-size:29.2px;font-family:'Liberation Sans',sans-serif;font-weight:400;color:#000;text-decoration:underline;text-decoration-thickness:2px;text-underline-offset:2px;">Log:0</div>
</div>
<div style="position:absolute;left:586.93px;top:563.75px;width:55.57px;height:33.50px;background:#e3e5e8;border:2px solid #c2c2c2;border-radius:8px"></div>
<div class="t" style="left:597.18px;top:584.48px;font-size:21.7px;font-family:'Liberation Mono',monospace;font-weight:400;color:#212121;">Log</div>
<div style="position:absolute;left:669.40px;top:554.95px;width:138.90px;height:37.70px;background:#e3e5e8;border:2px solid #c2c2c2;border-radius:8px"></div>
<div class="t" style="left:678.80px;top:578.94px;font-size:25.6px;font-family:'Liberation Mono',monospace;font-weight:400;color:#212121;">float32</div>
<div style="position:absolute;left:822.60px;top:554.95px;width:59.60px;height:37.70px;background:#e3e5e8;border:2px solid #c2c2c2;border-radius:8px"></div>
<div class="t" style="left:831.40px;top:578.94px;font-size:25.6px;font-family:'Liberation Mono',monospace;font-weight:400;color:#212121;">2D</div>
<div style="position:absolute;left:895.40px;top:526.00px;width:230.62px;height:68.00px;background:#e3e5e8;border:2px solid #c2c2c2;border-radius:8px;box-sizing:border-box"></div>
<div class="t" style="left:907.70px;top:544.28px;font-size:21.5px;font-family:'Liberation Mono',monospace;font-weight:400;color:#212121;">size:1000</div>
<div style="position:absolute;left:900.00px;top:554.75px;width:222.02px;height:2.00px;background:#cfcfcf;"></div>
<div style="position:absolute;left:913.00px;top:562.75px;width:34.80px;height:28.00px;background:#e52592;border-radius:5px"></div>
<div class="t" style="left:917.50px;top:580.03px;font-size:21.5px;font-family:'Liberation Mono',monospace;font-weight:400;color:#fff;">-∞</div>
<div class="t" style="left:947.80px;top:580.03px;font-size:21.5px;font-family:'Liberation Mono',monospace;font-weight:400;color:#212121;">×1</div>
<div style="position:absolute;left:984.11px;top:562.75px;width:22.00px;height:28.00px;background:#9e9e9e;border-radius:5px"></div>
<div class="t" style="left:988.66px;top:580.03px;font-size:21.5px;font-family:'Liberation Mono',monospace;font-weight:400;color:#fff;">-</div>
<div class="t" style="left:1006.11px;top:580.03px;font-size:21.5px;font-family:'Liberation Mono',monospace;font-weight:400;color:#212121;">×994</div>
<div style="position:absolute;left:1068.22px;top:562.75px;width:22.00px;height:28.00px;background:#9e9e9e;border-radius:5px"></div>
<div class="t" style="left:1072.77px;top:580.03px;font-size:21.5px;font-family:'Liberation Mono',monospace;font-weight:400;color:#fff;">0</div>
<div class="t" style="left:1090.22px;top:580.03px;font-size:21.5px;font-family:'Liberation Mono',monospace;font-weight:400;color:#212121;">×5</div>
<div style="position:absolute;left:21.50px;top:690.25px;width:1116.50px;height:2.00px;background:#e3e3e3;"></div>
<div class="t" style="left:81.00px;top:648.32px;font-size:27px;font-family:'Liberation Mono',monospace;font-weight:400;color:#757575;transform:scaleX(0.8486);transform-origin:0 0;">89</div>
<div style="position:absolute;left:171px;top:605.50px;width:477px;height:85.75px;overflow:hidden">
<div class="t" style="left:399.00px;top:23.48px;font-size:29.2px;font-family:'Liberation Sans',sans-serif;font-weight:400;color:#000;text-decoration:underline;text-decoration-thickness:2px;text-underline-offset:2px;">mul:0</div>
</div>
<div style="position:absolute;left:586.93px;top:649.50px;width:55.57px;height:33.50px;background:#e3e5e8;border:2px solid #c2c2c2;border-radius:8px"></div>
<div class="t" style="left:597.18px;top:670.23px;font-size:21.7px;font-family:'Liberation Mono',monospace;font-weight:400;color:#212121;">Mul</div>
<div style="position:absolute;left:669.40px;top:640.70px;width:138.90px;height:37.70px;background:#e3e5e8;border:2px solid #c2c2c2;border-radius:8px"></div>
<div class="t" style="left:678.80px;top:664.69px;font-size:25.6px;font-family:'Liberation Mono',monospace;font-weight:400;color:#212121;">float32</div>
<div style="position:absolute;left:822.60px;top:640.70px;width:59.60px;height:37.70px;background:#e3e5e8;border:2px solid #c2c2c2;border-radius:8px"></div>
<div class="t" style="left:831.40px;top:664.69px;font-size:25.6px;font-family:'Liberation Mono',monospace;font-weight:400;color:#212121;">2D</div>
<div style="position:absolute;left:895.40px;top:611.75px;width:256.42px;height:68.00px;background:#e3e5e8;border:2px solid #c2c2c2;border-radius:8px;box-sizing:border-box"></div>
<div class="t" style="left:907.70px;top:630.03px;font-size:21.5px;font-family:'Liberation Mono',monospace;font-weight:400;color:#212121;">size:1000</div>
<div style="position:absolute;left:900.00px;top:640.50px;width:247.82px;height:2.00px;background:#cfcfcf;"></div>
<div style="position:absolute;left:913.00px;top:648.50px;width:47.71px;height:28.00px;background:#e52592;border-radius:5px"></div>
<div class="t" style="left:917.50px;top:665.78px;font-size:21.5px;font-family:'Liberation Mono',monospace;font-weight:400;color:#fff;">NaN</div>
<div class="t" style="left:960.71px;top:665.78px;font-size:21.5px;font-family:'Liberation Mono',monospace;font-weight:400;color:#212121;">×1</div>
<div style="position:absolute;left:997.01px;top:648.50px;width:22.00px;height:28.00px;background:#9e9e9e;border-radius:5px"></div>
<div class="t" style="left:1001.56px;top:665.78px;font-size:21.5px;font-family:'Liberation Mono',monospace;font-weight:400;color:#fff;">0</div>
<div class="t" style="left:1019.01px;top:665.78px;font-size:21.5px;font-family:'Liberation Mono',monospace;font-weight:400;color:#212121;">×904</div>
<div style="position:absolute;left:1081.12px;top:648.50px;width:22.00px;height:28.00px;background:#9e9e9e;border-radius:5px"></div>
<div class="t" style="left:1085.67px;top:665.78px;font-size:21.5px;font-family:'Liberation Mono',monospace;font-weight:400;color:#fff;">+</div>
<div class="t" style="left:1103.12px;top:665.78px;font-size:21.5px;font-family:'Liberation Mono',monospace;font-weight:400;color:#212121;">×95</div>
<div style="position:absolute;left:21.50px;top:776.00px;width:1116.50px;height:2.00px;background:#e3e3e3;"></div>
<div class="t" style="left:81.00px;top:734.07px;font-size:27px;font-family:'Liberation Mono',monospace;font-weight:400;color:#757575;transform:scaleX(0.8486);transform-origin:0 0;">90</div>
<div style="position:absolute;left:171px;top:691.25px;width:477px;height:85.75px;overflow:hidden">
<div class="t" style="left:373.00px;top:23.48px;font-size:29.2px;font-family:'Liberation Sans',sans-serif;font-weight:400;color:#000;text-decoration:underline;text-decoration-thickness:2px;text-underline-offset:2px;">Mean:0</div>
</div>
<div style="position:absolute;left:573.91px;top:735.25px;width:68.59px;height:33.50px;background:#e3e5e8;border:2px solid #c2c2c2;border-radius:8px"></div>
<div class="t" style="left:584.16px;top:755.98px;font-size:21.7px;font-family:'Liberation Mono',monospace;font-weight:400;color:#212121;">Mean</div>
<div style="position:absolute;left:669.40px;top:726.45px;width:138.90px;height:37.70px;background:#e3e5e8;border:2px solid #c2c2c2;border-radius:8px"></div>
<div class="t" style="left:678.80px;top:750.44px;font-size:25.6px;font-family:'Liberation Mono',monospace;font-weight:400;color:#212121;">float32</div>
<div style="position:absolute;left:822.60px;top:726.45px;width:59.60px;height:37.70px;background:#e3e5e8;border:2px solid #c2c2c2;border-radius:8px"></div>
<div class="t" style="left:831.40px;top:750.44px;font-size:25.6px;font-family:'Liberation Mono',monospace;font-weight:400;color:#212121;">0D</div>
<div style="position:absolute;left:895.40px;top:697.50px;width:101.11px;height:68.00px;background:#e3e5e8;border:2px solid #c2c2c2;border-radius:8px;box-sizing:border-box"></div>
<div class="t" style="left:907.70px;top:715.78px;font-size:21.5px;font-family:'Liberation Mono',monospace;font-weight:400;color:#212121;">size:1</div>
<div style="position:absolute;left:900.00px;top:726.25px;width:92.51px;height:2.00px;background:#cfcfcf;"></div>
<div style="position:absolute;left:913.00px;top:734.25px;width:47.71px;height:28.00px;background:#e52592;border-radius:5px"></div>
<div class="t" style="left:917.50px;top:751.53px;font-size:21.5px;font-family:'Liberation Mono',monospace;font-weight:400;color:#fff;">NaN</div>
<div class="t" style="left:960.71px;top:751.53px;font-size:21.5px;font-family:'Liberation Mono',monospace;font-weight:400;color:#212121;">×1</div>
<div style="position:absolute;left:21.50px;top:861.75px;width:1116.50px;height:2.00px;background:#e3e3e3;"></div>
<div class="t" style="left:81.00px;top:819.82px;font-size:27px;font-family:'Liberation Mono',monospace;font-weight:400;color:#757575;transform:scaleX(0.8486);transform-origin:0 0;">91</div>
<div style="position:absolute;left:171px;top:777.00px;width:477px;height:85.75px;overflow:hidden">
<div class="t" style="left:291.83px;top:23.48px;font-size:29.2px;font-family:'Liberation Sans',sans-serif;font-weight:400;color:#000;text-decoration:underline;text-decoration-thickness:2px;text-underline-offset:2px;">Placeholder:0</div>
</div>
<div style="position:absolute;left:482.76px;top:821.00px;width:159.74px;height:33.50px;background:#e3e5e8;border:2px solid #c2c2c2;border-radius:8px"></div>
<div class="t" style="left:493.01px;top:841.73px;font-size:21.7px;font-family:'Liberation Mono',monospace;font-weight:400;color:#212121;">Placeholder</div>
<div style="position:absolute;left:669.40px;top:812.20px;width:138.90px;height:37.70px;background:#e3e5e8;border:2px solid #c2c2c2;border-radius:8px"></div>
<div class="t" style="left:678.80px;top:836.19px;font-size:25.6px;font-family:'Liberation Mono',monospace;font-weight:400;color:#212121;">float32</div>
<div style="position:absolute;left:822.60px;top:812.20px;width:59.60px;height:37.70px;background:#e3e5e8;border:2px solid #c2c2c2;border-radius:8px"></div>
<div class="t" style="left:831.40px;top:836.19px;font-size:25.6px;font-family:'Liberation Mono',monospace;font-weight:400;color:#212121;">2D</div>
<div style="position:absolute;left:895.40px;top:783.25px;width:327.63px;height:68.00px;background:#e3e5e8;border:2px solid #c2c2c2;border-radius:8px;box-sizing:border-box"></div>
<div class="t" style="left:907.70px;top:801.53px;font-size:21.5px;font-family:'Liberation Mono',monospace;font-weight:400;color:#212121;">size:1000</div>
<div style="position:absolute;left:900.00px;top:812.00px;width:319.03px;height:2.00px;background:#cfcfcf;"></div>
<div style="position:absolute;left:913.00px;top:820.00px;width:47.71px;height:28.00px;background:#e52592;border-radius:5px"></div>
<div class="t" style="left:917.50px;top:837.28px;font-size:21.5px;font-family:'Liberation Mono',monospace;font-weight:400;color:#fff;">NaN</div>
<div class="t" style="left:960.71px;top:837.28px;font-size:21.5px;font-family:'Liberation Mono',monospace;font-weight:400;color:#212121;">×10</div>
<div style="position:absolute;left:1009.91px;top:820.00px;width:22.00px;height:28.00px;background:#9e9e9e;border-radius:5px"></div>
<div class="t" style="left:1014.46px;top:837.28px;font-size:21.5px;font-family:'Liberation Mono',monospace;font-weight:400;color:#fff;">-</div>
<div class="t" style="left:1031.91px;top:837.28px;font-size:21.5px;font-family:'Liberation Mono',monospace;font-weight:400;color:#212121;">×95</div>
<div style="position:absolute;left:1081.12px;top:820.00px;width:22.00px;height:28.00px;background:#9e9e9e;border-radius:5px"></div>
<div class="t" style="left:1085.67px;top:837.28px;font-size:21.5px;font-family:'Liberation Mono',monospace;font-weight:400;color:#fff;">0</div>
<div class="t" style="left:1103.12px;top:837.28px;font-size:21.5px;font-family:'Liberation Mono',monospace;font-weight:400;color:#212121;">×7</div>
<div style="position:absolute;left:1139.42px;top:820.00px;width:22.00px;height:28.00px;background:#9e9e9e;border-radius:5px"></div>
<div class="t" style="left:1143.97px;top:837.28px;font-size:21.5px;font-family:'Liberation Mono',monospace;font-weight:400;color:#fff;">+</div>
<div class="t" style="left:1161.42px;top:837.28px;font-size:21.5px;font-family:'Liberation Mono',monospace;font-weight:400;color:#212121;">×888</div>
<div style="position:absolute;left:21.50px;top:947.50px;width:1116.50px;height:2.00px;background:#e3e3e3;"></div>
<div class="t" style="left:81.00px;top:905.57px;font-size:27px;font-family:'Liberation Mono',monospace;font-weight:400;color:#757575;transform:scaleX(0.8486);transform-origin:0 0;">92</div>
<div style="position:absolute;left:171px;top:862.75px;width:477px;height:85.75px;overflow:hidden">
<div class="t" style="left:126.26px;top:23.48px;font-size:29.2px;font-family:'Liberation Sans',sans-serif;font-weight:400;color:#000;text-decoration:underline;text-decoration-thickness:2px;text-underline-offset:2px;">gradients/add_grad/Sum:0</div>
</div>
<div style="position:absolute;left:586.93px;top:906.75px;width:55.57px;height:33.50px;background:#e3e5e8;border:2px solid #c2c2c2;border-radius:8px"></div>
<div class="t" style="left:597.18px;top:927.48px;font-size:21.7px;font-family:'Liberation Mono',monospace;font-weight:400;color:#212121;">Sum</div>
<div style="position:absolute;left:669.40px;top:897.95px;width:138.90px;height:37.70px;background:#e3e5e8;border:2px solid #c2c2c2;border-radius:8px"></div>
<div class="t" style="left:678.80px;top:921.94px;font-size:25.6px;font-family:'Liberation Mono',monospace;font-weight:400;color:#212121;">float32</div>
<div style="position:absolute;left:822.60px;top:897.95px;width:59.60px;height:37.70px;background:#e3e5e8;border:2px solid #c2c2c2;border-radius:8px"></div>
<div class="t" style="left:831.40px;top:921.94px;font-size:25.6px;font-family:'Liberation Mono',monospace;font-weight:400;color:#212121;">1D</div>
<div style="position:absolute;left:895.40px;top:869.00px;width:114.01px;height:68.00px;background:#e3e5e8;border:2px solid #c2c2c2;border-radius:8px;box-sizing:border-box"></div>
<div class="t" style="left:907.70px;top:887.28px;font-size:21.5px;font-family:'Liberation Mono',monospace;font-weight:400;color:#212121;">size:10</div>
<div style="position:absolute;left:900.00px;top:897.75px;width:105.41px;height:2.00px;background:#cfcfcf;"></div>
<div style="position:absolute;left:913.00px;top:905.75px;width:47.71px;height:28.00px;background:#e52592;border-radius:5px"></div>
<div class="t" style="left:917.50px;top:923.03px;font-size:21.5px;font-family:'Liberation Mono',monospace;font-weight:400;color:#fff;">NaN</div>
<div class="t" style="left:960.71px;top:923.03px;font-size:21.5px;font-family:'Liberation Mono',monospace;font-weight:400;color:#212121;">×10</div>
<div style="position:absolute;left:21.50px;top:1033.25px;width:1116.50px;height:2.00px;background:#e3e3e3;"></div>
<div class="t" style="left:81.00px;top:991.32px;font-size:27px;font-family:'Liberation Mono',monospace;font-weight:400;color:#757575;transform:scaleX(0.8486);transform-origin:0 0;">93</div>
<div style="position:absolute;left:171px;top:948.50px;width:477px;height:85.75px;overflow:hidden">
<div class="t" style="left:69.41px;top:23.48px;font-size:29.2px;font-family:'Liberation Sans',sans-serif;font-weight:400;color:#000;text-decoration:underline;text-decoration-thickness:2px;text-underline-offset:2px;">gradients/add_grad/Reshape:0</div>
</div>
<div style="position:absolute;left:534.85px;top:992.50px;width:107.65px;height:33.50px;background:#e3e5e8;border:2px solid #c2c2c2;border-radius:8px"></div>
<div class="t" style="left:545.10px;top:1013.23px;font-size:21.7px;font-family:'Liberation Mono',monospace;font-weight:400;color:#212121;">Reshape</div>
<div style="position:absolute;left:669.40px;top:983.70px;width:138.90px;height:37.70px;background:#e3e5e8;border:2px solid #c2c2c2;border-radius:8px"></div>
<div class="t" style="left:678.80px;top:1007.69px;font-size:25.6px;font-family:'Liberation Mono',monospace;font-weight:400;color:#212121;">float32</div>
<div style="position:absolute;left:822.60px;top:983.70px;width:59.60px;height:37.70px;background:#e3e5e8;border:2px solid #c2c2c2;border-radius:8px"></div>
<div class="t" style="left:831.40px;top:1007.69px;font-size:25.6px;font-family:'Liberation Mono',monospace;font-weight:400;color:#212121;">1D</div>
<div style="position:absolute;left:895.40px;top:954.75px;width:114.01px;height:68.00px;background:#e3e5e8;border:2px solid #c2c2c2;border-radius:8px;box-sizing:border-box"></div>
<div class="t" style="left:907.70px;top:973.03px;font-size:21.5px;font-family:'Liberation Mono',monospace;font-weight:400;color:#212121;">size:10</div>
<div style="position:absolute;left:900.00px;top:983.50px;width:105.41px;height:2.00px;background:#cfcfcf;"></div>
<div style="position:absolute;left:913.00px;top:991.50px;width:47.71px;height:28.00px;background:#e52592;border-radius:5px"></div>
<div class="t" style="left:917.50px;top:1008.78px;font-size:21.5px;font-family:'Liberation Mono',monospace;font-weight:400;color:#fff;">NaN</div>
<div class="t" style="left:960.71px;top:1008.78px;font-size:21.5px;font-family:'Liberation Mono',monospace;font-weight:400;color:#212121;">×10</div>
<div style="position:absolute;left:21.50px;top:1119.00px;width:1116.50px;height:2.00px;background:#e3e3e3;"></div>
<div class="t" style="left:81.00px;top:1077.07px;font-size:27px;font-family:'Liberation Mono',monospace;font-weight:400;color:#757575;transform:scaleX(0.8486);transform-origin:0 0;">94</div>
<div style="position:absolute;left:171px;top:1034.25px;width:477px;height:85.75px;overflow:hidden">
<div class="t" style="left:-160.43px;top:23.48px;font-size:29.2px;font-family:'Liberation Sans',sans-serif;font-weight:400;color:#000;text-decoration:underline;text-decoration-thickness:2px;text-underline-offset:2px;">gradients/add/MatMul/MatMul/ReadVariableOp:0</div>
</div>
<div style="position:absolute;left:443.69px;top:1078.25px;width:198.81px;height:33.50px;background:#e3e5e8;border:2px solid #c2c2c2;border-radius:8px"></div>
<div class="t" style="left:453.94px;top:1098.98px;font-size:21.7px;font-family:'Liberation Mono',monospace;font-weight:400;color:#212121;">ReadVariableOp</div>
<div style="position:absolute;left:669.40px;top:1069.45px;width:138.90px;height:37.70px;background:#e3e5e8;border:2px solid #c2c2c2;border-radius:8px"></div>
<div class="t" style="left:678.80px;top:1093.44px;font-size:25.6px;font-family:'Liberation Mono',monospace;font-weight:400;color:#212121;">float32</div>
<div style="position:absolute;left:822.60px;top:1069.45px;width:59.60px;height:37.70px;background:#e3e5e8;border:2px solid #c2c2c2;border-radius:8px"></div>
<div class="t" style="left:831.40px;top:1093.44px;font-size:25.6px;font-family:'Liberation Mono',monospace;font-weight:400;color:#212121;">2D</div>
<div style="position:absolute;left:895.40px;top:1040.50px;width:211.02px;height:68.00px;background:#e3e5e8;border:2px solid #c2c2c2;border-radius:8px;box-sizing:border-box"></div>
<div class="t" style="left:907.70px;top:1058.78px;font-size:21.5px;font-family:'Liberation Mono',monospace;font-weight:400;color:#212121;">size:5000</div>
<div style="position:absolute;left:900.00px;top:1069.25px;width:202.42px;height:2.00px;background:#cfcfcf;"></div>
<div style="position:absolute;left:913.00px;top:1077.25px;width:47.71px;height:28.00px;background:#e52592;border-radius:5px"></div>
<div class="t" style="left:917.50px;top:1094.53px;font-size:21.5px;font-family:'Liberation Mono',monospace;font-weight:400;color:#fff;">NaN</div>
<div class="t" style="left:960.71px;top:1094.53px;font-size:21.5px;font-family:'Liberation Mono',monospace;font-weight:400;color:#212121;">×10</div>
<div style="position:absolute;left:1009.91px;top:1077.25px;width:22.00px;height:28.00px;background:#9e9e9e;border-radius:5px"></div>
<div class="t" style="left:1014.46px;top:1094.53px;font-size:21.5px;font-family:'Liberation Mono',monospace;font-weight:400;color:#fff;">-</div>
<div class="t" style="left:1031.91px;top:1094.53px;font-size:21.5px;font-family:'Liberation Mono',monospace;font-weight:400;color:#212121;">×4990</div>
</div>
<div style="position:absolute;left:2670.00px;top:189.00px;width:30.00px;height:1063.00px;background:#f1f1f1;"></div>
<svg style="position:absolute;left:2677px;top:199px" width="16" height="10"><polygon points="0,9 8,0.5 16,9" fill="#505050"/></svg>
<svg style="position:absolute;left:2677px;top:1232px" width="16" height="10"><polygon points="0,0.5 8,9 16,0.5" fill="#505050"/></svg>
<div style="position:absolute;left:2672.00px;top:354.00px;width:26.00px;height:29.00px;background:#c1c1c1;"></div>
<div style="position:absolute;left:0.00px;top:1267.00px;width:1530.00px;height:587.00px;background:#fffffe;"></div>
<div style="position:absolute;left:0;top:1348px;width:1287px;height:506px;overflow:hidden">
<div style="position:absolute;left:66.00px;top:238.70px;width:11.00px;height:29.30px;background:#ff9f4d;"></div>
<div style="position:absolute;left:123.00px;top:-40.74px;width:2.50px;height:586.38px;background:#c8c8c8;"></div>
<div style="position:absolute;left:150.40px;top:-40.74px;width:2.00px;height:370.36px;background:#d3d3d3;"></div>
<div style="position:absolute;left:150.40px;top:483.88px;width:2.00px;height:61.76px;background:#d3d3d3;"></div>
<div style="position:absolute;left:176.80px;top:-40.74px;width:2.00px;height:154.34px;background:#d3d3d3;"></div>
<div style="position:absolute;left:176.80px;top:175.28px;width:2.00px;height:30.90px;background:#d3d3d3;"></div>
<div style="position:absolute;left:203.20px;top:20.98px;width:2.00px;height:30.90px;background:#d3d3d3;"></div>
<div style="position:absolute;left:203.20px;top:82.70px;width:2.00px;height:30.90px;background:#d3d3d3;"></div>
<div style="position:absolute;left:123.00px;top:241.00px;width:516.00px;height:25.00px;background:#ffd2ae;"></div>
<div class="t" style="left:25.79px;top:7.27px;font-size:22px;font-family:'Liberation Mono',monospace;font-weight:400;color:#237893;">208</div>
<div class="t" style="left:203.20px;top:7.27px;font-size:22px;font-family:'Liberation Mono',monospace;font-weight:400;color:#a31515;">probs: Class probabilities predicted by the model. The shape is expected</div>
<div class="t" style="left:25.79px;top:38.13px;font-size:22px;font-family:'Liberation Mono',monospace;font-weight:400;color:#237893;">209</div>
<div class="t" style="left:229.60px;top:38.13px;font-size:22px;font-family:'Liberation Mono',monospace;font-weight:400;color:#a31515;">to be (?, 10).</div>
<div class="t" style="left:25.79px;top:68.99px;font-size:22px;font-family:'Liberation Mono',monospace;font-weight:400;color:#237893;">210</div>
<div class="t" style="left:203.20px;top:68.99px;font-size:22px;font-family:'Liberation Mono',monospace;font-weight:400;color:#a31515;">labels: Truth labels for the classes, as one-hot encoded vectors. The</div>
<div class="t" style="left:25.79px;top:99.85px;font-size:22px;font-family:'Liberation Mono',monospace;font-weight:400;color:#237893;">211</div>
<div class="t" style="left:229.60px;top:99.85px;font-size:22px;font-family:'Liberation Mono',monospace;font-weight:400;color:#a31515;">shape is expected to be the same as `probs`.</div>
<div class="t" style="left:25.79px;top:130.71px;font-size:22px;font-family:'Liberation Mono',monospace;font-weight:400;color:#237893;">212</div>
<div class="t" style="left:25.79px;top:161.57px;font-size:22px;font-family:'Liberation Mono',monospace;font-weight:400;color:#237893;">213</div>
<div class="t" style="left:176.80px;top:161.57px;font-size:22px;font-family:'Liberation Mono',monospace;font-weight:400;color:#a31515;">Returns:</div>
<div class="t" style="left:25.79px;top:192.43px;font-size:22px;font-family:'Liberation Mono',monospace;font-weight:400;color:#237893;">214</div>
<div class="t" style="left:203.20px;top:192.43px;font-size:22px;font-family:'Liberation Mono',monospace;font-weight:400;color:#a31515;">A scalar loss tensor.</div>
<div class="t" style="left:25.79px;top:223.29px;font-size:22px;font-family:'Liberation Mono',monospace;font-weight:400;color:#237893;">215</div>
<div class="t" style="left:176.80px;top:223.29px;font-size:22px;font-family:'Liberation Mono',monospace;font-weight:400;color:#a31515;">&quot;&quot;&quot;</div>
<div class="t" style="left:25.79px;top:254.15px;font-size:22px;font-family:'Liberation Mono',monospace;font-weight:400;color:#237893;">216</div>
<div class="t" style="left:176.80px;top:254.15px;font-size:22px;font-family:'Liberation Mono',monospace;font-weight:400;color:#000;">diff = -labels * tf.math.log(probs)</div>
<div class="t" style="left:25.79px;top:285.01px;font-size:22px;font-family:'Liberation Mono',monospace;font-weight:400;color:#237893;">217</div>
<div class="t" style="left:176.80px;top:285.01px;font-size:22px;font-family:'Liberation Mono',monospace;font-weight:400;color:#000;">loss = tf.reduce_mean(diff)</div>
<div class="t" style="left:25.79px;top:315.87px;font-size:22px;font-family:'Liberation Mono',monospace;font-weight:400;color:#237893;">218</div>
<div class="t" style="left:176.80px;top:315.87px;font-size:22px;font-family:'Liberation Mono',monospace;font-weight:400;color:#0000ff;">return</div>
<div class="t" style="left:269.20px;top:315.87px;font-size:22px;font-family:'Liberation Mono',monospace;font-weight:400;color:#000;">loss</div>
<div class="t" style="left:25.79px;top:346.73px;font-size:22px;font-family:'Liberation Mono',monospace;font-weight:400;color:#237893;">219</div>
<div class="t" style="left:25.79px;top:377.59px;font-size:22px;font-family:'Liberation Mono',monospace;font-weight:400;color:#237893;">220</div>
<div class="t" style="left:150.40px;top:377.59px;font-size:22px;font-family:'Liberation Mono',monospace;font-weight:400;color:#000;">train_batches = </div>
<div class="t" style="left:361.60px;top:377.59px;font-size:22px;font-family:'Liberation Mono',monospace;font-weight:400;color:#0000ff;">iter</div>
<div class="t" style="left:414.40px;top:377.59px;font-size:22px;font-family:'Liberation Mono',monospace;font-weight:400;color:#000;">(train_ds)</div>
<div class="t" style="left:25.79px;top:408.45px;font-size:22px;font-family:'Liberation Mono',monospace;font-weight:400;color:#237893;">221</div>
<div class="t" style="left:150.40px;top:408.45px;font-size:22px;font-family:'Liberation Mono',monospace;font-weight:400;color:#000;">test_batches = </div>
<div class="t" style="left:348.40px;top:408.45px;font-size:22px;font-family:'Liberation Mono',monospace;font-weight:400;color:#0000ff;">iter</div>
<div class="t" style="left:401.20px;top:408.45px;font-size:22px;font-family:'Liberation Mono',monospace;font-weight:400;color:#000;">(test_ds)</div>
<div class="t" style="left:25.79px;top:439.31px;font-size:22px;font-family:'Liberation Mono',monospace;font-weight:400;color:#237893;">222</div>
<div class="t" style="left:150.40px;top:439.31px;font-size:22px;font-family:'Liberation Mono',monospace;font-weight:400;color:#000;">optimizer = tf.optimizers.Adam(learning_rate=FLAGS.learning_rate)</div>
<div class="t" style="left:25.79px;top:470.17px;font-size:22px;font-family:'Liberation Mono',monospace;font-weight:400;color:#237893;">223</div>
<div class="t" style="left:150.40px;top:470.17px;font-size:22px;font-family:'Liberation Mono',monospace;font-weight:400;color:#0000ff;">for</div>
<div class="t" style="left:203.20px;top:470.17px;font-size:22px;font-family:'Liberation Mono',monospace;font-weight:400;color:#000;">i</div>
<div class="t" style="left:229.60px;top:470.17px;font-size:22px;font-family:'Liberation Mono',monospace;font-weight:400;color:#0000ff;">in</div>
<div class="t" style="left:269.20px;top:470.17px;font-size:22px;font-family:'Liberation Mono',monospace;font-weight:400;color:#0000ff;">range</div>
<div class="t" style="left:335.20px;top:470.17px;font-size:22px;font-family:'Liberation Mono',monospace;font-weight:400;color:#000;">(FLAGS.max_steps):</div>
<div class="t" style="left:25.79px;top:501.03px;font-size:22px;font-family:'Liberation Mono',monospace;font-weight:400;color:#237893;">224</div>
<div class="t" style="left:176.80px;top:501.03px;font-size:22px;font-family:'Liberation Mono',monospace;font-weight:400;color:#000;">x_train, y_train = </div>
<div class="t" style="left:427.60px;top:501.03px;font-size:22px;font-family:'Liberation Mono',monospace;font-weight:400;color:#0000ff;">next</div>
<div class="t" style="left:480.40px;top:501.03px;font-size:22px;font-family:'Liberation Mono',monospace;font-weight:400;color:#000;">(train_batches)</div>
<div class="t" style="left:25.79px;top:531.89px;font-size:22px;font-family:'Liberation Mono',monospace;font-weight:400;color:#237893;">225</div>
</div>
<div style="position:absolute;left:1287px;top:1348px;width:194px;height:506px;overflow:hidden;background:#fffffe">
<div style="position:absolute;left:8.2px;top:0.60px;font-family:'Liberation Mono',monospace;font-size:22px;line-height:30.769px;white-space:pre;color:#000;transform:scale(0.1508,0.1300);transform-origin:0 0"><span style="color:#000;-webkit-text-stroke:1.3px #000">  </span><span style="color:#000;-webkit-text-stroke:1.3px #000">parser</span><span style="color:#000;-webkit-text-stroke:1.3px #000">.</span><span style="color:#000;-webkit-text-stroke:1.3px #000">add_argument</span><span style="color:#000;-webkit-text-stroke:1.3px #000">(</span>
<span style="color:#000;-webkit-text-stroke:1.3px #000">      </span><span style="color:#a31515;-webkit-text-stroke:1.3px #a31515">&quot;--use_random_config_path&quot;</span><span style="color:#000;-webkit-text-stroke:1.3px #000">,</span>
<span style="color:#000;-webkit-text-stroke:1.3px #000">      </span><span style="color:#000;-webkit-text-stroke:1.3px #000">type</span><span style="color:#000;-webkit-text-stroke:1.3px #000">=</span><span style="color:#a31515;-webkit-text-stroke:1.3px #a31515">&quot;bool&quot;</span><span style="color:#000;-webkit-text-stroke:1.3px #000">,</span>
<span style="color:#000;-webkit-text-stroke:1.3px #000">      </span><span style="color:#000;-webkit-text-stroke:1.3px #000">nargs</span><span style="color:#000;-webkit-text-stroke:1.3px #000">=</span><span style="color:#a31515;-webkit-text-stroke:1.3px #a31515">&quot;?&quot;</span><span style="color:#000;-webkit-text-stroke:1.3px #000">,</span>
<span style="color:#000;-webkit-text-stroke:1.3px #000">      </span><span style="color:#000;-webkit-text-stroke:1.3px #000">const</span><span style="color:#000;-webkit-text-stroke:1.3px #000">=</span><span style="color:#0000ff;-webkit-text-stroke:1.3px #0000ff">True</span><span style="color:#000;-webkit-text-stroke:1.3px #000">,</span>
<span style="color:#000;-webkit-text-stroke:1.3px #000">      </span><span style="color:#000;-webkit-text-stroke:1.3px #000">default</span><span style="color:#000;-webkit-text-stroke:1.3px #000">=</span><span style="color:#0000ff;-webkit-text-stroke:1.3px #0000ff">False</span><span style="color:#000;-webkit-text-stroke:1.3px #000">,</span>
<span style="color:#000;-webkit-text-stroke:1.3px #000">      </span><span style="color:#000;-webkit-text-stroke:1.3px #000">help</span><span style="color:#000;-webkit-text-stroke:1.3px #000">=</span><span style="color:#a31515;-webkit-text-stroke:1.3px #a31515">&quot;&quot;&quot;If set, set config file path to a random file in the temporary</span>
<span style="color:#a31515;-webkit-text-stroke:1.3px #a31515">      directory.&quot;&quot;&quot;</span><span style="color:#000;-webkit-text-stroke:1.3px #000">)</span>
<span style="color:#000;-webkit-text-stroke:1.3px #000">  </span><span style="color:#0000ff;-webkit-text-stroke:1.3px #0000ff">return</span><span style="color:#000;-webkit-text-stroke:1.3px #000"> </span><span style="color:#000;-webkit-text-stroke:1.3px #000">parser</span><span style="color:#000;-webkit-text-stroke:1.3px #000">.</span><span style="color:#000;-webkit-text-stroke:1.3px #000">parse_known_args</span><span style="color:#000;-webkit-text-stroke:1.3px #000">()</span>
 
 
<span style="color:#0000ff;-webkit-text-stroke:1.3px #0000ff">def</span><span style="color:#000;-webkit-text-stroke:1.3px #000"> </span><span style="color:#000;-webkit-text-stroke:1.3px #000">main</span><span style="color:#000;-webkit-text-stroke:1.3px #000">(</span><span style="color:#000;-webkit-text-stroke:1.3px #000">_</span><span style="color:#000;-webkit-text-stroke:1.3px #000">):</span>
<span style="color:#000;-webkit-text-stroke:1.3px #000">  </span><span style="color:#0000ff;-webkit-text-stroke:1.3px #0000ff">if</span><span style="color:#000;-webkit-text-stroke:1.3px #000"> </span><span style="color:#000;-webkit-text-stroke:1.3px #000">FLAGS</span><span style="color:#000;-webkit-text-stroke:1.3px #000">.</span><span style="color:#000;-webkit-text-stroke:1.3px #000">check_numerics</span><span style="color:#000;-webkit-text-stroke:1.3px #000"> </span><span style="color:#0000ff;-webkit-text-stroke:1.3px #0000ff">and</span><span style="color:#000;-webkit-text-stroke:1.3px #000"> </span><span style="color:#000;-webkit-text-stroke:1.3px #000">FLAGS</span><span style="color:#000;-webkit-text-stroke:1.3px #000">.</span><span style="color:#000;-webkit-text-stroke:1.3px #000">dump_dir</span><span style="color:#000;-webkit-text-stroke:1.3px #000">:</span>
<span style="color:#000;-webkit-text-stroke:1.3px #000">    </span><span style="color:#0000ff;-webkit-text-stroke:1.3px #0000ff">raise</span><span style="color:#000;-webkit-text-stroke:1.3px #000"> </span><span style="color:#000;-webkit-text-stroke:1.3px #000">ValueError</span><span style="color:#000;-webkit-text-stroke:1.3px #000">(</span>
<span style="color:#000;-webkit-text-stroke:1.3px #000">        </span><span style="color:#a31515;-webkit-text-stroke:1.3px #a31515">&quot;The --check_numerics and --dump_dir flags are mutually &quot;</span>
<span style="color:#000;-webkit-text-stroke:1.3px #000">        </span><span style="color:#a31515;-webkit-text-stroke:1.3px #a31515">&quot;exclusive.&quot;</span><span style="color:#000;-webkit-text-stroke:1.3px #000">)</span>
<span style="color:#000;-webkit-text-stroke:1.3px #000">  </span><span style="color:#0000ff;-webkit-text-stroke:1.3px #0000ff">if</span><span style="color:#000;-webkit-text-stroke:1.3px #000"> </span><span style="color:#000;-webkit-text-stroke:1.3px #000">FLAGS</span><span style="color:#000;-webkit-text-stroke:1.3px #000">.</span><span style="color:#000;-webkit-text-stroke:1.3px #000">check_numerics</span><span style="color:#000;-webkit-text-stroke:1.3px #000">:</span>
<span style="color:#000;-webkit-text-stroke:1.3px #000">    </span><span style="color:#000;-webkit-text-stroke:1.3px #000">tf</span><span style="color:#000;-webkit-text-stroke:1.3px #000">.</span><span style="color:#000;-webkit-text-stroke:1.3px #000">debugging</span><span style="color:#000;-webkit-text-stroke:1.3px #000">.</span><span style="color:#000;-webkit-text-stroke:1.3px #000">enable_check_numerics</span><span style="color:#000;-webkit-text-stroke:1.3px #000">()</span>
<span style="color:#000;-webkit-text-stroke:1.3px #000">  </span><span style="color:#0000ff;-webkit-text-stroke:1.3px #0000ff">elif</span><span style="color:#000;-webkit-text-stroke:1.3px #000"> </span><span style="color:#000;-webkit-text-stroke:1.3px #000">FLAGS</span><span style="color:#000;-webkit-text-stroke:1.3px #000">.</span><span style="color:#000;-webkit-text-stroke:1.3px #000">dump_dir</span><span style="color:#000;-webkit-text-stroke:1.3px #000">:</span>
<span style="color:#000;-webkit-text-stroke:1.3px #000">    </span><span style="color:#000;-webkit-text-stroke:1.3px #000">tf</span><span style="color:#000;-webkit-text-stroke:1.3px #000">.</span><span style="color:#000;-webkit-text-stroke:1.3px #000">debugging</span><span style="color:#000;-webkit-text-stroke:1.3px #000">.</span><span style="color:#000;-webkit-text-stroke:1.3px #000">experimental</span><span style="color:#000;-webkit-text-stroke:1.3px #000">.</span><span style="color:#000;-webkit-text-stroke:1.3px #000">enable_dump_debug_info</span><span style="color:#000;-webkit-text-stroke:1.3px #000">(</span>
<span style="color:#000;-webkit-text-stroke:1.3px #000">        </span><span style="color:#000;-webkit-text-stroke:1.3px #000">FLAGS</span><span style="color:#000;-webkit-text-stroke:1.3px #000">.</span><span style="color:#000;-webkit-text-stroke:1.3px #000">dump_dir</span><span style="color:#000;-webkit-text-stroke:1.3px #000">,</span>
<span style="color:#000;-webkit-text-stroke:1.3px #000">        </span><span style="color:#000;-webkit-text-stroke:1.3px #000">tensor_debug_mode</span><span style="color:#000;-webkit-text-stroke:1.3px #000">=</span><span style="color:#000;-webkit-text-stroke:1.3px #000">FLAGS</span><span style="color:#000;-webkit-text-stroke:1.3px #000">.</span><span style="color:#000;-webkit-text-stroke:1.3px #000">dump_tensor_debug_mode</span><span style="color:#000;-webkit-text-stroke:1.3px #000">,</span>
<span style="color:#000;-webkit-text-stroke:1.3px #000">        </span><span style="color:#000;-webkit-text-stroke:1.3px #000">circular_buffer_size</span><span style="color:#000;-webkit-text-stroke:1.3px #000">=</span><span style="color:#000;-webkit-text-stroke:1.3px #000">FLAGS</span><span style="color:#000;-webkit-text-stroke:1.3px #000">.</span><span style="color:#000;-webkit-text-stroke:1.3px #000">dump_circular_buffer_size</span><span style="color:#000;-webkit-text-stroke:1.3px #000">)</span>
 
<span style="color:#000;-webkit-text-stroke:1.3px #000">  </span><span style="color:#008000;-webkit-text-stroke:1.3px #008000"># Import data</span>
<span style="color:#000;-webkit-text-stroke:1.3px #000">  </span><span style="color:#0000ff;-webkit-text-stroke:1.3px #0000ff">if</span><span style="color:#000;-webkit-text-stroke:1.3px #000"> </span><span style="color:#000;-webkit-text-stroke:1.3px #000">FLAGS</span><span style="color:#000;-webkit-text-stroke:1.3px #000">.</span><span style="color:#000;-webkit-text-stroke:1.3px #000">fake_data</span><span style="color:#000;-webkit-text-stroke:1.3px #000">:</span>
<span style="color:#000;-webkit-text-stroke:1.3px #000">    </span><span style="color:#000;-webkit-text-stroke:1.3px #000">imgs</span><span style="color:#000;-webkit-text-stroke:1.3px #000"> = </span><span style="color:#000;-webkit-text-stroke:1.3px #000">tf</span><span style="color:#000;-webkit-text-stroke:1.3px #000">.</span><span style="color:#000;-webkit-text-stroke:1.3px #000">random</span><span style="color:#000;-webkit-text-stroke:1.3px #000">.</span><span style="color:#000;-webkit-text-stroke:1.3px #000">uniform</span><span style="color:#000;-webkit-text-stroke:1.3px #000">(</span><span style="color:#000;-webkit-text-stroke:1.3px #000">maxval</span><span style="color:#000;-webkit-text-stroke:1.3px #000">=</span><span style="color:#098658;-webkit-text-stroke:1.3px #098658">256</span><span style="color:#000;-webkit-text-stroke:1.3px #000">, </span><span style="color:#000;-webkit-text-stroke:1.3px #000">shape</span><span style="color:#000;-webkit-text-stroke:1.3px #000">=(</span><span style="color:#098658;-webkit-text-stroke:1.3px #098658">1000</span><span style="color:#000;-webkit-text-stroke:1.3px #000">, </span><span style="color:#098658;-webkit-text-stroke:1.3px #098658">28</span><span style="color:#000;-webkit-text-stroke:1.3px #000">, </span><span style="color:#098658;-webkit-text-stroke:1.3px #098658">28</span><span style="color:#000;-webkit-text-stroke:1.3px #000">), </span><span style="color:#000;-webkit-text-stroke:1.3px #000">dtype</span><span style="color:#000;-webkit-text-stroke:1.3px #000">=</span><span style="color:#000;-webkit-text-stroke:1.3px #000">tf</span><span style="color:#000;-webkit-text-stroke:1.3px #000">.</span><span style="color:#000;-webkit-text-stroke:1.3px #000">int32</span><span style="color:#000;-webkit-text-stroke:1.3px #000">)</span>
<span style="color:#000;-webkit-text-stroke:1.3px #000">    </span><span style="color:#000;-webkit-text-stroke:1.3px #000">labels</span><span style="color:#000;-webkit-text-stroke:1.3px #000"> = </span><span style="color:#000;-webkit-text-stroke:1.3px #000">tf</span><span style="color:#000;-webkit-text-stroke:1.3px #000">.</span><span style="color:#000;-webkit-text-stroke:1.3px #000">random</span><span style="color:#000;-webkit-text-stroke:1.3px #000">.</span><span style="color:#000;-webkit-text-stroke:1.3px #000">uniform</span><span style="color:#000;-webkit-text-stroke:1.3px #000">(</span><span style="color:#000;-webkit-text-stroke:1.3px #000">maxval</span><span style="color:#000;-webkit-text-stroke:1.3px #000">=</span><span style="color:#098658;-webkit-text-stroke:1.3px #098658">10</span><span style="color:#000;-webkit-text-stroke:1.3px #000">, </span><span style="color:#000;-webkit-text-stroke:1.3px #000">shape</span><span style="color:#000;-webkit-text-stroke:1.3px #000">=(</span><span style="color:#098658;-webkit-text-stroke:1.3px #098658">1000</span><span style="color:#000;-webkit-text-stroke:1.3px #000">,), </span><span style="color:#000;-webkit-text-stroke:1.3px #000">dtype</span><span style="color:#000;-webkit-text-stroke:1.3px #000">=</span><span style="color:#000;-webkit-text-stroke:1.3px #000">tf</span><span style="color:#000;-webkit-text-stroke:1.3px #000">.</span><span style="color:#000;-webkit-text-stroke:1.3px #000">int32</span><span style="color:#000;-webkit-text-stroke:1.3px #000">)</span>
<span style="color:#000;-webkit-text-stroke:1.3px #000">    </span><span style="color:#000;-webkit-text-stroke:1.3px #000">mnist_train</span><span style="color:#000;-webkit-text-stroke:1.3px #000"> = </span><span style="color:#000;-webkit-text-stroke:1.3px #000">imgs</span><span style="color:#000;-webkit-text-stroke:1.3px #000">, </span><span style="color:#000;-webkit-text-stroke:1.3px #000">labels</span>
<span style="color:#000;-webkit-text-stroke:1.3px #000">    </span><span style="color:#000;-webkit-text-stroke:1.3px #000">mnist_test</span><span style="color:#000;-webkit-text-stroke:1.3px #000"> = </span><span style="color:#000;-webkit-text-stroke:1.3px #000">imgs</span><span style="color:#000;-webkit-text-stroke:1.3px #000">, </span><span style="color:#000;-webkit-text-stroke:1.3px #000">labels</span>
<span style="color:#000;-webkit-text-stroke:1.3px #000">  </span><span style="color:#0000ff;-webkit-text-stroke:1.3px #0000ff">else</span><span style="color:#000;-webkit-text-stroke:1.3px #000">:</span>
<span style="color:#000;-webkit-text-stroke:1.3px #000">    </span><span style="color:#000;-webkit-text-stroke:1.3px #000">mnist_train</span><span style="color:#000;-webkit-text-stroke:1.3px #000">, </span><span style="color:#000;-webkit-text-stroke:1.3px #000">mnist_test</span><span style="color:#000;-webkit-text-stroke:1.3px #000"> = </span><span style="color:#000;-webkit-text-stroke:1.3px #000">tf</span><span style="color:#000;-webkit-text-stroke:1.3px #000">.</span><span style="color:#000;-webkit-text-stroke:1.3px #000">keras</span><span style="color:#000;-webkit-text-stroke:1.3px #000">.</span><span style="color:#000;-webkit-text-stroke:1.3px #000">datasets</span><span style="color:#000;-webkit-text-stroke:1.3px #000">.</span><span style="color:#000;-webkit-text-stroke:1.3px #000">mnist</span><span style="color:#000;-webkit-text-stroke:1.3px #000">.</span><span style="color:#000;-webkit-text-stroke:1.3px #000">load_data</span><span style="color:#000;-webkit-text-stroke:1.3px #000">()</span>
 
<span style="color:#000;-webkit-text-stroke:1.3px #000">  </span><span style="color:#a31515;-webkit-text-stroke:1.3px #a31515">@tf.function</span>
<span style="color:#000;-webkit-text-stroke:1.3px #000">  </span><span style="color:#0000ff;-webkit-text-stroke:1.3px #0000ff">def</span><span style="color:#000;-webkit-text-stroke:1.3px #000"> </span><span style="color:#000;-webkit-text-stroke:1.3px #000">format_example</span><span style="color:#000;-webkit-text-stroke:1.3px #000">(</span><span style="color:#000;-webkit-text-stroke:1.3px #000">imgs</span><span style="color:#000;-webkit-text-stroke:1.3px #000">, </span><span style="color:#000;-webkit-text-stroke:1.3px #000">labels</span><span style="color:#000;-webkit-text-stroke:1.3px #000">):</span>
<span style="color:#000;-webkit-text-stroke:1.3px #000">    </span><span style="color:#a31515;-webkit-text-stroke:1.3px #a31515">&quot;&quot;&quot;Formats each training and test example to work with our model.&quot;&quot;&quot;</span>
<span style="color:#000;-webkit-text-stroke:1.3px #000">    </span><span style="color:#000;-webkit-text-stroke:1.3px #000">imgs</span><span style="color:#000;-webkit-text-stroke:1.3px #000"> = </span><span style="color:#000;-webkit-text-stroke:1.3px #000">tf</span><span style="color:#000;-webkit-text-stroke:1.3px #000">.</span><span style="color:#000;-webkit-text-stroke:1.3px #000">reshape</span><span style="color:#000;-webkit-text-stroke:1.3px #000">(</span><span style="color:#000;-webkit-text-stroke:1.3px #000">imgs</span><span style="color:#000;-webkit-text-stroke:1.3px #000">, [-</span><span style="color:#098658;-webkit-text-stroke:1.3px #098658">1</span><span style="color:#000;-webkit-text-stroke:1.3px #000">, </span><span style="color:#098658;-webkit-text-stroke:1.3px #098658">28</span><span style="color:#000;-webkit-text-stroke:1.3px #000"> * </span><span style="color:#098658;-webkit-text-stroke:1.3px #098658">28</span><span style="color:#000;-webkit-text-stroke:1.3px #000">])</span>
<span style="color:#000;-webkit-text-stroke:1.3px #000">    </span><span style="color:#000;-webkit-text-stroke:1.3px #000">imgs</span><span style="color:#000;-webkit-text-stroke:1.3px #000"> = </span><span style="color:#000;-webkit-text-stroke:1.3px #000">tf</span><span style="color:#000;-webkit-text-stroke:1.3px #000">.</span><span style="color:#000;-webkit-text-stroke:1.3px #000">cast</span><span style="color:#000;-webkit-text-stroke:1.3px #000">(</span><span style="color:#000;-webkit-text-stroke:1.3px #000">imgs</span><span style="color:#000;-webkit-text-stroke:1.3px #000">, </span><span style="color:#000;-webkit-text-stroke:1.3px #000">tf</span><span style="color:#000;-webkit-text-stroke:1.3px #000">.</span><span style="color:#000;-webkit-text-stroke:1.3px #000">float32</span><span style="color:#000;-webkit-text-stroke:1.3px #000">) / </span><span style="color:#098658;-webkit-text-stroke:1.3px #098658">255.0</span>
<span style="color:#000;-webkit-text-stroke:1.3px #000">    </span><span style="color:#000;-webkit-text-stroke:1.3px #000">labels</span><span style="color:#000;-webkit-text-stroke:1.3px #000"> = </span><span style="color:#000;-webkit-text-stroke:1.3px #000">tf</span><span style="color:#000;-webkit-text-stroke:1.3px #000">.</span><span style="color:#000;-webkit-text-stroke:1.3px #000">one_hot</span><span style="color:#000;-webkit-text-stroke:1.3px #000">(</span><span style="color:#000;-webkit-text-stroke:1.3px #000">labels</span><span style="color:#000;-webkit-text-stroke:1.3px #000">, </span><span style="color:#000;-webkit-text-stroke:1.3px #000">depth</span><span style="color:#000;-webkit-text-stroke:1.3px #000">=</span><span style="color:#098658;-webkit-text-stroke:1.3px #098658">10</span><span style="color:#000;-webkit-text-stroke:1.3px #000">, </span><span style="color:#000;-webkit-text-stroke:1.3px #000">dtype</span><span style="color:#000;-webkit-text-stroke:1.3px #000">=</span><span style="color:#000;-webkit-text-stroke:1.3px #000">tf</span><span style="color:#000;-webkit-text-stroke:1.3px #000">.</span><span style="color:#000;-webkit-text-stroke:1.3px #000">float32</span><span style="color:#000;-webkit-text-stroke:1.3px #000">)</span>
<span style="color:#000;-webkit-text-stroke:1.3px #000">    </span><span style="color:#0000ff;-webkit-text-stroke:1.3px #0000ff">return</span><span style="color:#000;-webkit-text-stroke:1.3px #000"> </span><span style="color:#000;-webkit-text-stroke:1.3px #000">imgs</span><span style="color:#000;-webkit-text-stroke:1.3px #000">, </span><span style="color:#000;-webkit-text-stroke:1.3px #000">labels</span>
 
<span style="color:#000;-webkit-text-stroke:1.3px #000">  </span><span style="color:#000;-webkit-text-stroke:1.3px #000">train_ds</span><span style="color:#000;-webkit-text-stroke:1.3px #000"> = </span><span style="color:#000;-webkit-text-stroke:1.3px #000">tf</span><span style="color:#000;-webkit-text-stroke:1.3px #000">.</span><span style="color:#000;-webkit-text-stroke:1.3px #000">data</span><span style="color:#000;-webkit-text-stroke:1.3px #000">.</span><span style="color:#000;-webkit-text-stroke:1.3px #000">Dataset</span><span style="color:#000;-webkit-text-stroke:1.3px #000">.</span><span style="color:#000;-webkit-text-stroke:1.3px #000">from_tensor_slices</span><span style="color:#000;-webkit-text-stroke:1.3px #000">(</span><span style="color:#000;-webkit-text-stroke:1.3px #000">mnist_train</span><span style="color:#000;-webkit-text-stroke:1.3px #000">).</span><span style="color:#000;-webkit-text-stroke:1.3px #000">shuffle</span><span style="color:#000;-webkit-text-stroke:1.3px #000">(</span>
<span style="color:#000;-webkit-text-stroke:1.3px #000">      </span><span style="color:#000;-webkit-text-stroke:1.3px #000">FLAGS</span><span style="color:#000;-webkit-text-stroke:1.3px #000">.</span><span style="color:#000;-webkit-text-stroke:1.3px #000">train_batch_size</span><span style="color:#000;-webkit-text-stroke:1.3px #000"> * </span><span style="color:#000;-webkit-text-stroke:1.3px #000">FLAGS</span><span style="color:#000;-webkit-text-stroke:1.3px #000">.</span><span style="color:#000;-webkit-text-stroke:1.3px #000">max_steps</span><span style="color:#000;-webkit-text-stroke:1.3px #000">,</span>
<span style="color:#000;-webkit-text-stroke:1.3px #000">      </span><span style="color:#000;-webkit-text-stroke:1.3px #000">seed</span><span style="color:#000;-webkit-text-stroke:1.3px #000">=</span><span style="color:#000;-webkit-text-stroke:1.3px #000">RAND_SEED</span><span style="color:#000;-webkit-text-stroke:1.3px #000">).</span><span style="color:#000;-webkit-text-stroke:1.3px #000">batch</span><span style="color:#000;-webkit-text-stroke:1.3px #000">(</span><span style="color:#000;-webkit-text-stroke:1.3px #000">FLAGS</span><span style="color:#000;-webkit-text-stroke:1.3px #000">.</span><span style="color:#000;-webkit-text-stroke:1.3px #000">train_batch_size</span><span style="color:#000;-webkit-text-stroke:1.3px #000">)</span>
<span style="color:#000;-webkit-text-stroke:1.3px #000">  </span><span style="color:#000;-webkit-text-stroke:1.3px #000">train_ds</span><span style="color:#000;-webkit-text-stroke:1.3px #000"> = </span><span style="color:#000;-webkit-text-stroke:1.3px #000">train_ds</span><span style="color:#000;-webkit-text-stroke:1.3px #000">.</span><span style="color:#000;-webkit-text-stroke:1.3px #000">map</span><span style="color:#000;-webkit-text-stroke:1.3px #000">(</span><span style="color:#000;-webkit-text-stroke:1.3px #000">format_example</span><span style="color:#000;-webkit-text-stroke:1.3px #000">)</span>
 
<span style="color:#000;-webkit-text-stroke:1.3px #000">  </span><span style="color:#000;-webkit-text-stroke:1.3px #000">test_ds</span><span style="color:#000;-webkit-text-stroke:1.3px #000"> = </span><span style="color:#000;-webkit-text-stroke:1.3px #000">tf</span><span style="color:#000;-webkit-text-stroke:1.3px #000">.</span><span style="color:#000;-webkit-text-stroke:1.3px #000">data</span><span style="color:#000;-webkit-text-stroke:1.3px #000">.</span><span style="color:#000;-webkit-text-stroke:1.3px #000">Dataset</span><span style="color:#000;-webkit-text-stroke:1.3px #000">.</span><span style="color:#000;-webkit-text-stroke:1.3px #000">from_tensor_slices</span><span style="color:#000;-webkit-text-stroke:1.3px #000">(</span><span style="color:#000;-webkit-text-stroke:1.3px #000">mnist_test</span><span style="color:#000;-webkit-text-stroke:1.3px #000">).</span><span style="color:#000;-webkit-text-stroke:1.3px #000">repeat</span><span style="color:#000;-webkit-text-stroke:1.3px #000">().</span><span style="color:#000;-webkit-text-stroke:1.3px #000">batch</span><span style="color:#000;-webkit-text-stroke:1.3px #000">(</span>
<span style="color:#000;-webkit-text-stroke:1.3px #000">      </span><span style="color:#0000ff;-webkit-text-stroke:1.3px #0000ff">len</span><span style="color:#000;-webkit-text-stroke:1.3px #000">(</span><span style="color:#000;-webkit-text-stroke:1.3px #000">mnist_test</span><span style="color:#000;-webkit-text-stroke:1.3px #000">[</span><span style="color:#098658;-webkit-text-stroke:1.3px #098658">0</span><span style="color:#000;-webkit-text-stroke:1.3px #000">]))</span>
<span style="color:#000;-webkit-text-stroke:1.3px #000">  </span><span style="color:#000;-webkit-text-stroke:1.3px #000">test_ds</span><span style="color:#000;-webkit-text-stroke:1.3px #000"> = </span><span style="color:#000;-webkit-text-stroke:1.3px #000">test_ds</span><span style="color:#000;-webkit-text-stroke:1.3px #000">.</span><span style="color:#000;-webkit-text-stroke:1.3px #000">map</span><span style="color:#000;-webkit-text-stroke:1.3px #000">(</span><span style="color:#000;-webkit-text-stroke:1.3px #000">format_example</span><span style="color:#000;-webkit-text-stroke:1.3px #000">)</span>
 
<span style="color:#000;-webkit-text-stroke:1.3px #000">  </span><span style="color:#0000ff;-webkit-text-stroke:1.3px #0000ff">def</span><span style="color:#000;-webkit-text-stroke:1.3px #000"> </span><span style="color:#000;-webkit-text-stroke:1.3px #000">get_dense_weights</span><span style="color:#000;-webkit-text-stroke:1.3px #000">(</span><span style="color:#000;-webkit-text-stroke:1.3px #000">input_dim</span><span style="color:#000;-webkit-text-stroke:1.3px #000">, </span><span style="color:#000;-webkit-text-stroke:1.3px #000">output_dim</span><span style="color:#000;-webkit-text-stroke:1.3px #000">):</span>
<span style="color:#000;-webkit-text-stroke:1.3px #000">    </span><span style="color:#a31515;-webkit-text-stroke:1.3px #a31515">&quot;&quot;&quot;Initializes the parameters for a single dense layer.&quot;&quot;&quot;</span>
<span style="color:#000;-webkit-text-stroke:1.3px #000">    </span><span style="color:#000;-webkit-text-stroke:1.3px #000">initial_kernel</span><span style="color:#000;-webkit-text-stroke:1.3px #000"> = </span><span style="color:#000;-webkit-text-stroke:1.3px #000">tf</span><span style="color:#000;-webkit-text-stroke:1.3px #000">.</span><span style="color:#000;-webkit-text-stroke:1.3px #000">keras</span><span style="color:#000;-webkit-text-stroke:1.3px #000">.</span><span style="color:#000;-webkit-text-stroke:1.3px #000">initializers</span><span style="color:#000;-webkit-text-stroke:1.3px #000">.</span><span style="color:#000;-webkit-text-stroke:1.3px #000">TruncatedNormal</span><span style="color:#000;-webkit-text-stroke:1.3px #000">(</span>
<span style="color:#000;-webkit-text-stroke:1.3px #000">        </span><span style="color:#000;-webkit-text-stroke:1.3px #000">mean</span><span style="color:#000;-webkit-text-stroke:1.3px #000">=</span><span style="color:#098658;-webkit-text-stroke:1.3px #098658">0.0</span><span style="color:#000;-webkit-text-stroke:1.3px #000">, </span><span style="color:#000;-webkit-text-stroke:1.3px #000">stddev</span><span style="color:#000;-webkit-text-stroke:1.3px #000">=</span><span style="color:#098658;-webkit-text-stroke:1.3px #098658">0.1</span><span style="color:#000;-webkit-text-stroke:1.3px #000">, </span><span style="color:#000;-webkit-text-stroke:1.3px #000">seed</span><span style="color:#000;-webkit-text-stroke:1.3px #000">=</span><span style="color:#000;-webkit-text-stroke:1.3px #000">RAND_SEED</span><span style="color:#000;-webkit-text-stroke:1.3px #000">)</span>
<span style="color:#000;-webkit-text-stroke:1.3px #000">    </span><span style="color:#000;-webkit-text-stroke:1.3px #000">kernel</span><span style="color:#000;-webkit-text-stroke:1.3px #000"> = </span><span style="color:#000;-webkit-text-stroke:1.3px #000">tf</span><span style="color:#000;-webkit-text-stroke:1.3px #000">.</span><span style="color:#000;-webkit-text-stroke:1.3px #000">Variable</span><span style="color:#000;-webkit-text-stroke:1.3px #000">(</span><span style="color:#000;-webkit-text-stroke:1.3px #000">initial_kernel</span><span style="color:#000;-webkit-text-stroke:1.3px #000">([</span><span style="color:#000;-webkit-text-stroke:1.3px #000">input_dim</span><span style="color:#000;-webkit-text-stroke:1.3px #000">, </span><span style="color:#000;-webkit-text-stroke:1.3px #000">output_dim</span><span style="color:#000;-webkit-text-stroke:1.3px #000">]))</span>
<span style="color:#000;-webkit-text-stroke:1.3px #000">    </span><span style="color:#000;-webkit-text-stroke:1.3px #000">bias</span><span style="color:#000;-webkit-text-stroke:1.3px #000"> = </span><span style="color:#000;-webkit-text-stroke:1.3px #000">tf</span><span style="color:#000;-webkit-text-stroke:1.3px #000">.</span><span style="color:#000;-webkit-text-stroke:1.3px #000">Variable</span><span style="color:#000;-webkit-text-stroke:1.3px #000">(</span><span style="color:#000;-webkit-text-stroke:1.3px #000">tf</span><span style="color:#000;-webkit-text-stroke:1.3px #000">.</span><span style="color:#000;-webkit-text-stroke:1.3px #000">constant</span><span style="color:#000;-webkit-text-stroke:1.3px #000">(</span><span style="color:#098658;-webkit-text-stroke:1.3px #098658">0.1</span><span style="color:#000;-webkit-text-stroke:1.3px #000">, </span><span style="color:#000;-webkit-text-stroke:1.3px #000">shape</span><span style="color:#000;-webkit-text-stroke:1.3px #000">=[</span><span style="color:#000;-webkit-text-stroke:1.3px #000">output_dim</span><span style="color:#000;-webkit-text-stroke:1.3px #000">]))</span>
 
<span style="color:#000;-webkit-text-stroke:1.3px #000">    </span><span style="color:#0000ff;-webkit-text-stroke:1.3px #0000ff">return</span><span style="color:#000;-webkit-text-stroke:1.3px #000"> </span><span style="color:#000;-webkit-text-stroke:1.3px #000">kernel</span><span style="color:#000;-webkit-text-stroke:1.3px #000">, </span><span style="color:#000;-webkit-text-stroke:1.3px #000">bias</span>
 
<span style="color:#000;-webkit-text-stroke:1.3px #000">  </span><span style="color:#a31515;-webkit-text-stroke:1.3px #a31515">@tf.function</span>
<span style="color:#000;-webkit-text-stroke:1.3px #000">  </span><span style="color:#0000ff;-webkit-text-stroke:1.3px #0000ff">def</span><span style="color:#000;-webkit-text-stroke:1.3px #000"> </span><span style="color:#000;-webkit-text-stroke:1.3px #000">dense_layer</span><span style="color:#000;-webkit-text-stroke:1.3px #000">(</span><span style="color:#000;-webkit-text-stroke:1.3px #000">weights</span><span style="color:#000;-webkit-text-stroke:1.3px #000">, </span><span style="color:#000;-webkit-text-stroke:1.3px #000">input_tensor</span><span style="color:#000;-webkit-text-stroke:1.3px #000">, </span><span style="color:#000;-webkit-text-stroke:1.3px #000">act</span><span style="color:#000;-webkit-text-stroke:1.3px #000">=</span><span style="color:#000;-webkit-text-stroke:1.3px #000">tf</span><span style="color:#000;-webkit-text-stroke:1.3px #000">.</span><span style="color:#000;-webkit-text-stroke:1.3px #000">nn</span><span style="color:#000;-webkit-text-stroke:1.3px #000">.</span><span style="color:#000;-webkit-text-stroke:1.3px #000">relu</span><span style="color:#000;-webkit-text-stroke:1.3px #000">):</span>
<span style="color:#000;-webkit-text-stroke:1.3px #000">    </span><span style="color:#a31515;-webkit-text-stroke:1.3px #a31515">&quot;&quot;&quot;Runs the forward computation for a single dense layer.&quot;&quot;&quot;</span>
<span style="color:#000;-webkit-text-stroke:1.3px #000">    </span><span style="color:#000;-webkit-text-stroke:1.3px #000">kernel</span><span style="color:#000;-webkit-text-stroke:1.3px #000">, </span><span style="color:#000;-webkit-text-stroke:1.3px #000">bias</span><span style="color:#000;-webkit-text-stroke:1.3px #000"> = </span><span style="color:#000;-webkit-text-stroke:1.3px #000">weights</span>
<span style="color:#000;-webkit-text-stroke:1.3px #000">    </span><span style="color:#000;-webkit-text-stroke:1.3px #000">preactivate</span><span style="color:#000;-webkit-text-stroke:1.3px #000"> = </span><span style="color:#000;-webkit-text-stroke:1.3px #000">tf</span><span style="color:#000;-webkit-text-stroke:1.3px #000">.</span><span style="color:#000;-webkit-text-stroke:1.3px #000">matmul</span><span style="color:#000;-webkit-text-stroke:1.3px #000">(</span><span style="color:#000;-webkit-text-stroke:1.3px #000">input_tensor</span><span style="color:#000;-webkit-text-stroke:1.3px #000">, </span><span style="color:#000;-webkit-text-stroke:1.3px #000">kernel</span><span style="color:#000;-webkit-text-stroke:1.3px #000">) + </span><span style="color:#000;-webkit-text-stroke:1.3px #000">bias</span>
 
<span style="color:#000;-webkit-text-stroke:1.3px #000">    </span><span style="color:#000;-webkit-text-stroke:1.3px #000">activations</span><span style="color:#000;-webkit-text-stroke:1.3px #000"> = </span><span style="color:#000;-webkit-text-stroke:1.3px #000">act</span><span style="color:#000;-webkit-text-stroke:1.3px #000">(</span><span style="color:#000;-webkit-text-stroke:1.3px #000">preactivate</span><span style="color:#000;-webkit-text-stroke:1.3px #000">)</span>
<span style="color:#000;-webkit-text-stroke:1.3px #000">    </span><span style="color:#0000ff;-webkit-text-stroke:1.3px #0000ff">return</span><span style="color:#000;-webkit-text-stroke:1.3px #000"> </span><span style="color:#000;-webkit-text-stroke:1.3px #000">activations</span>
 
<span style="color:#000;-webkit-text-stroke:1.3px #000">  </span><span style="color:#008000;-webkit-text-stroke:1.3px #008000"># init model</span>
<span style="color:#000;-webkit-text-stroke:1.3px #000">  </span><span style="color:#000;-webkit-text-stroke:1.3px #000">hidden_weights</span><span style="color:#000;-webkit-text-stroke:1.3px #000"> = </span><span style="color:#000;-webkit-text-stroke:1.3px #000">get_dense_weights</span><span style="color:#000;-webkit-text-stroke:1.3px #000">(</span><span style="color:#000;-webkit-text-stroke:1.3px #000">IMAGE_SIZE</span><span style="color:#000;-webkit-text-stroke:1.3px #000">**</span><span style="color:#098658;-webkit-text-stroke:1.3px #098658">2</span><span style="color:#000;-webkit-text-stroke:1.3px #000">, </span><span style="color:#000;-webkit-text-stroke:1.3px #000">HIDDEN_SIZE</span><span style="color:#000;-webkit-text-stroke:1.3px #000">)</span>
<span style="color:#000;-webkit-text-stroke:1.3px #000">  </span><span style="color:#000;-webkit-text-stroke:1.3px #000">output_weights</span><span style="color:#000;-webkit-text-stroke:1.3px #000"> = </span><span style="color:#000;-webkit-text-stroke:1.3px #000">get_dense_weights</span><span style="color:#000;-webkit-text-stroke:1.3px #000">(</span><span style="color:#000;-webkit-text-stroke:1.3px #000">HIDDEN_SIZE</span><span style="color:#000;-webkit-text-stroke:1.3px #000">, </span><span style="color:#000;-webkit-text-stroke:1.3px #000">NUM_LABELS</span><span style="color:#000;-webkit-text-stroke:1.3px #000">)</span>
<span style="color:#000;-webkit-text-stroke:1.3px #000">  </span><span style="color:#000;-webkit-text-stroke:1.3px #000">variables</span><span style="color:#000;-webkit-text-stroke:1.3px #000"> = </span><span style="color:#000;-webkit-text-stroke:1.3px #000">hidden_weights</span><span style="color:#000;-webkit-text-stroke:1.3px #000"> + </span><span style="color:#000;-webkit-text-stroke:1.3px #000">output_weights</span>
 
<span style="color:#000;-webkit-text-stroke:1.3px #000">  </span><span style="color:#a31515;-webkit-text-stroke:1.3px #a31515">@tf.function</span>
<span style="color:#000;-webkit-text-stroke:1.3px #000">  </span><span style="color:#0000ff;-webkit-text-stroke:1.3px #0000ff">def</span><span style="color:#000;-webkit-text-stroke:1.3px #000"> </span><span style="color:#000;-webkit-text-stroke:1.3px #000">model</span><span style="color:#000;-webkit-text-stroke:1.3px #000">(</span><span style="color:#000;-webkit-text-stroke:1.3px #000">x</span><span style="color:#000;-webkit-text-stroke:1.3px #000">):</span>
<span style="color:#000;-webkit-text-stroke:1.3px #000">    </span><span style="color:#a31515;-webkit-text-stroke:1.3px #a31515">&quot;&quot;&quot;Feed forward function of the model.</span>
<span style="color:#a31515;-webkit-text-stroke:1.3px #a31515"></span>
<span style="color:#a31515;-webkit-text-stroke:1.3px #a31515">    Args:</span>
<span style="color:#a31515;-webkit-text-stroke:1.3px #a31515">      x: a (?, 28*28) tensor consisting of the feature inputs for a batch of</span>
<span style="color:#a31515;-webkit-text-stroke:1.3px #a31515">        examples.</span>
<span style="color:#a31515;-webkit-text-stroke:1.3px #a31515"></span>
<span style="color:#a31515;-webkit-text-stroke:1.3px #a31515">    Returns:</span>
<span style="color:#a31515;-webkit-text-stroke:1.3px #a31515">      A (?, 10) tensor containing the class scores for each example.</span>
<span style="color:#a31515;-webkit-text-stroke:1.3px #a31515">    &quot;&quot;&quot;</span>
<span style="color:#000;-webkit-text-stroke:1.3px #000">    </span><span style="color:#000;-webkit-text-stroke:1.3px #000">hidden_act</span><span style="color:#000;-webkit-text-stroke:1.3px #000"> = </span><span style="color:#000;-webkit-text-stroke:1.3px #000">dense_layer</span><span style="color:#000;-webkit-text-stroke:1.3px #000">(</span><span style="color:#000;-webkit-text-stroke:1.3px #000">hidden_weights</span><span style="color:#000;-webkit-text-stroke:1.3px #000">, </span><span style="color:#000;-webkit-text-stroke:1.3px #000">x</span><span style="color:#000;-webkit-text-stroke:1.3px #000">)</span>
<span style="color:#000;-webkit-text-stroke:1.3px #000">    </span><span style="color:#000;-webkit-text-stroke:1.3px #000">logits_act</span><span style="color:#000;-webkit-text-stroke:1.3px #000"> = </span><span style="color:#000;-webkit-text-stroke:1.3px #000">dense_layer</span><span style="color:#000;-webkit-text-stroke:1.3px #000">(</span><span style="color:#000;-webkit-text-stroke:1.3px #000">output_weights</span><span style="color:#000;-webkit-text-stroke:1.3px #000">, </span><span style="color:#000;-webkit-text-stroke:1.3px #000">hidden_act</span><span style="color:#000;-webkit-text-stroke:1.3px #000">, </span><span style="color:#000;-webkit-text-stroke:1.3px #000">tf</span><span style="color:#000;-webkit-text-stroke:1.3px #000">.</span><span style="color:#000;-webkit-text-stroke:1.3px #000">identity</span><span style="color:#000;-webkit-text-stroke:1.3px #000">)</span>
<span style="color:#000;-webkit-text-stroke:1.3px #000">    </span><span style="color:#000;-webkit-text-stroke:1.3px #000">y</span><span style="color:#000;-webkit-text-stroke:1.3px #000"> = </span><span style="color:#000;-webkit-text-stroke:1.3px #000">tf</span><span style="color:#000;-webkit-text-stroke:1.3px #000">.</span><span style="color:#000;-webkit-text-stroke:1.3px #000">nn</span><span style="color:#000;-webkit-text-stroke:1.3px #000">.</span><span style="color:#000;-webkit-text-stroke:1.3px #000">softmax</span><span style="color:#000;-webkit-text-stroke:1.3px #000">(</span><span style="color:#000;-webkit-text-stroke:1.3px #000">logits_act</span><span style="color:#000;-webkit-text-stroke:1.3px #000">)</span>
<span style="color:#000;-webkit-text-stroke:1.3px #000">    </span><span style="color:#0000ff;-webkit-text-stroke:1.3px #0000ff">return</span><span style="color:#000;-webkit-text-stroke:1.3px #000"> </span><span style="color:#000;-webkit-text-stroke:1.3px #000">y</span>
 
<span style="color:#000;-webkit-text-stroke:1.3px #000">  </span><span style="color:#a31515;-webkit-text-stroke:1.3px #a31515">@tf.function</span>
<span style="color:#000;-webkit-text-stroke:1.3px #000">  </span><span style="color:#0000ff;-webkit-text-stroke:1.3px #0000ff">def</span><span style="color:#000;-webkit-text-stroke:1.3px #000"> </span><span style="color:#000;-webkit-text-stroke:1.3px #000">loss</span><span style="color:#000;-webkit-text-stroke:1.3px #000">(</span><span style="color:#000;-webkit-text-stroke:1.3px #000">probs</span><span style="color:#000;-webkit-text-stroke:1.3px #000">, </span><span style="color:#000;-webkit-text-stroke:1.3px #000">labels</span><span style="color:#000;-webkit-text-stroke:1.3px #000">):</span>
<span style="color:#000;-webkit-text-stroke:1.3px #000">    </span><span style="color:#a31515;-webkit-text-stroke:1.3px #a31515">&quot;&quot;&quot;Calculates cross entropy loss.</span>
<span style="color:#a31515;-webkit-text-stroke:1.3px #a31515"></span>
<span style="color:#a31515;-webkit-text-stroke:1.3px #a31515">    Args:</span>
<span style="color:#a31515;-webkit-text-stroke:1.3px #a31515">      probs: Class probabilities predicted by the model. The shape is expected</span>
<span style="color:#a31515;-webkit-text-stroke:1.3px #a31515">        to be (?, 10).</span>
<span style="color:#a31515;-webkit-text-stroke:1.3px #a31515">      labels: Truth labels for the classes, as one-hot encoded vectors. The</span>
<span style="color:#a31515;-webkit-text-stroke:1.3px #a31515">        shape is expected to be the same as `probs`.</span>
<span style="color:#a31515;-webkit-text-stroke:1.3px #a31515"></span>
<span style="color:#a31515;-webkit-text-stroke:1.3px #a31515">    Returns:</span>
<span style="color:#a31515;-webkit-text-stroke:1.3px #a31515">      A scalar loss tensor.</span>
<span style="color:#a31515;-webkit-text-stroke:1.3px #a31515">    &quot;&quot;&quot;</span>
<span style="color:#000;-webkit-text-stroke:1.3px #000">    </span><span style="color:#000;-webkit-text-stroke:1.3px #000">diff</span><span style="color:#000;-webkit-text-stroke:1.3px #000"> = -</span><span style="color:#000;-webkit-text-stroke:1.3px #000">labels</span><span style="color:#000;-webkit-text-stroke:1.3px #000"> * </span><span style="color:#000;-webkit-text-stroke:1.3px #000">tf</span><span style="color:#000;-webkit-text-stroke:1.3px #000">.</span><span style="color:#000;-webkit-text-stroke:1.3px #000">math</span><span style="color:#000;-webkit-text-stroke:1.3px #000">.</span><span style="color:#000;-webkit-text-stroke:1.3px #000">log</span><span style="color:#000;-webkit-text-stroke:1.3px #000">(</span><span style="color:#000;-webkit-text-stroke:1.3px #000">probs</span><span style="color:#000;-webkit-text-stroke:1.3px #000">)</span>
<span style="color:#000;-webkit-text-stroke:1.3px #000">    </span><span style="color:#000;-webkit-text-stroke:1.3px #000">loss</span><span style="color:#000;-webkit-text-stroke:1.3px #000"> = </span><span style="color:#000;-webkit-text-stroke:1.3px #000">tf</span><span style="color:#000;-webkit-text-stroke:1.3px #000">.</span><span style="color:#000;-webkit-text-stroke:1.3px #000">reduce_mean</span><span style="color:#000;-webkit-text-stroke:1.3px #000">(</span><span style="color:#000;-webkit-text-stroke:1.3px #000">diff</span><span style="color:#000;-webkit-text-stroke:1.3px #000">)</span>
<span style="color:#000;-webkit-text-stroke:1.3px #000">    </span><span style="color:#0000ff;-webkit-text-stroke:1.3px #0000ff">return</span><span style="color:#000;-webkit-text-stroke:1.3px #000"> </span><span style="color:#000;-webkit-text-stroke:1.3px #000">loss</span>
 
<span style="color:#000;-webkit-text-stroke:1.3px #000">  </span><span style="color:#000;-webkit-text-stroke:1.3px #000">train_batches</span><span style="color:#000;-webkit-text-stroke:1.3px #000"> = </span><span style="color:#0000ff;-webkit-text-stroke:1.3px #0000ff">iter</span><span style="color:#000;-webkit-text-stroke:1.3px #000">(</span><span style="color:#000;-webkit-text-stroke:1.3px #000">train_ds</span><span style="color:#000;-webkit-text-stroke:1.3px #000">)</span>
<span style="color:#000;-webkit-text-stroke:1.3px #000">  </span><span style="color:#000;-webkit-text-stroke:1.3px #000">test_batches</span><span style="color:#000;-webkit-text-stroke:1.3px #000"> = </span><span style="color:#0000ff;-webkit-text-stroke:1.3px #0000ff">iter</span><span style="color:#000;-webkit-text-stroke:1.3px #000">(</span><span style="color:#000;-webkit-text-stroke:1.3px #000">test_ds</span><span style="color:#000;-webkit-text-stroke:1.3px #000">)</span>
<span style="color:#000;-webkit-text-stroke:1.3px #000">  </span><span style="color:#000;-webkit-text-stroke:1.3px #000">optimizer</span><span style="color:#000;-webkit-text-stroke:1.3px #000"> = </span><span style="color:#000;-webkit-text-stroke:1.3px #000">tf</span><span style="color:#000;-webkit-text-stroke:1.3px #000">.</span><span style="color:#000;-webkit-text-stroke:1.3px #000">optimizers</span><span style="color:#000;-webkit-text-stroke:1.3px #000">.</span><span style="color:#000;-webkit-text-stroke:1.3px #000">Adam</span><span style="color:#000;-webkit-text-stroke:1.3px #000">(</span><span style="color:#000;-webkit-text-stroke:1.3px #000">learning_rate</span><span style="color:#000;-webkit-text-stroke:1.3px #000">=</span><span style="color:#000;-webkit-text-stroke:1.3px #000">FLAGS</span><span style="color:#000;-webkit-text-stroke:1.3px #000">.</span><span style="color:#000;-webkit-text-stroke:1.3px #000">learning_rate</span><span style="color:#000;-webkit-text-stroke:1.3px #000">)</span>
<span style="color:#000;-webkit-text-stroke:1.3px #000">  </span><span style="color:#0000ff;-webkit-text-stroke:1.3px #0000ff">for</span><span style="color:#000;-webkit-text-stroke:1.3px #000"> </span><span style="color:#000;-webkit-text-stroke:1.3px #000">i</span><span style="color:#000;-webkit-text-stroke:1.3px #000"> </span><span style="color:#0000ff;-webkit-text-stroke:1.3px #0000ff">in</span><span style="color:#000;-webkit-text-stroke:1.3px #000"> </span><span style="color:#0000ff;-webkit-text-stroke:1.3px #0000ff">range</span><span style="color:#000;-webkit-text-stroke:1.3px #000">(</span><span style="color:#000;-webkit-text-stroke:1.3px #000">FLAGS</span><span style="color:#000;-webkit-text-stroke:1.3px #000">.</span><span style="color:#000;-webkit-text-stroke:1.3px #000">max_steps</span><span style="color:#000;-webkit-text-stroke:1.3px #000">):</span>
<span style="color:#000;-webkit-text-stroke:1.3px #000">    </span><span style="color:#000;-webkit-text-stroke:1.3px #000">x_train</span><span style="color:#000;-webkit-text-stroke:1.3px #000">, </span><span style="color:#000;-webkit-text-stroke:1.3px #000">y_train</span><span style="color:#000;-webkit-text-stroke:1.3px #000"> = </span><span style="color:#0000ff;-webkit-text-stroke:1.3px #0000ff">next</span><span style="color:#000;-webkit-text-stroke:1.3px #000">(</span><span style="color:#000;-webkit-text-stroke:1.3px #000">train_batches</span><span style="color:#000;-webkit-text-stroke:1.3px #000">)</span>
<span style="color:#000;-webkit-text-stroke:1.3px #000">    </span><span style="color:#000;-webkit-text-stroke:1.3px #000">x_test</span><span style="color:#000;-webkit-text-stroke:1.3px #000">, </span><span style="color:#000;-webkit-text-stroke:1.3px #000">y_test</span><span style="color:#000;-webkit-text-stroke:1.3px #000"> = </span><span style="color:#0000ff;-webkit-text-stroke:1.3px #0000ff">next</span><span style="color:#000;-webkit-text-stroke:1.3px #000">(</span><span style="color:#000;-webkit-text-stroke:1.3px #000">test_batches</span><span style="color:#000;-webkit-text-stroke:1.3px #000">)</span>
 
<span style="color:#000;-webkit-text-stroke:1.3px #000">    </span><span style="color:#008000;-webkit-text-stroke:1.3px #008000"># Train Step</span>
<span style="color:#000;-webkit-text-stroke:1.3px #000">    </span><span style="color:#0000ff;-webkit-text-stroke:1.3px #0000ff">with</span><span style="color:#000;-webkit-text-stroke:1.3px #000"> </span><span style="color:#000;-webkit-text-stroke:1.3px #000">tf</span><span style="color:#000;-webkit-text-stroke:1.3px #000">.</span><span style="color:#000;-webkit-text-stroke:1.3px #000">GradientTape</span><span style="color:#000;-webkit-text-stroke:1.3px #000">() </span><span style="color:#0000ff;-webkit-text-stroke:1.3px #0000ff">as</span><span style="color:#000;-webkit-text-stroke:1.3px #000"> </span><span style="color:#000;-webkit-text-stroke:1.3px #000">tape</span><span style="color:#000;-webkit-text-stroke:1.3px #000">:</span>
<span style="color:#000;-webkit-text-stroke:1.3px #000">      </span><span style="color:#000;-webkit-text-stroke:1.3px #000">y</span><span style="color:#000;-webkit-text-stroke:1.3px #000"> = </span><span style="color:#000;-webkit-text-stroke:1.3px #000">model</span><span style="color:#000;-webkit-text-stroke:1.3px #000">(</span><span style="color:#000;-webkit-text-stroke:1.3px #000">x_train</span><span style="color:#000;-webkit-text-stroke:1.3px #000">)</span>
<span style="color:#000;-webkit-text-stroke:1.3px #000">      </span><span style="color:#000;-webkit-text-stroke:1.3px #000">loss_val</span><span style="color:#000;-webkit-text-stroke:1.3px #000"> = </span><span style="color:#000;-webkit-text-stroke:1.3px #000">loss</span><span style="color:#000;-webkit-text-stroke:1.3px #000">(</span><span style="color:#000;-webkit-text-stroke:1.3px #000">y</span><span style="color:#000;-webkit-text-stroke:1.3px #000">, </span><span style="color:#000;-webkit-text-stroke:1.3px #000">y_train</span><span style="color:#000;-webkit-text-stroke:1.3px #000">)</span>
<span style="color:#000;-webkit-text-stroke:1.3px #000">    </span><span style="color:#000;-webkit-text-stroke:1.3px #000">grads</span><span style="color:#000;-webkit-text-stroke:1.3px #000"> = </span><span style="color:#000;-webkit-text-stroke:1.3px #000">tape</span><span style="color:#000;-webkit-text-stroke:1.3px #000">.</span><span style="color:#000;-webkit-text-stroke:1.3px #000">gradient</span><span style="color:#000;-webkit-text-stroke:1.3px #000">(</span><span style="color:#000;-webkit-text-stroke:1.3px #000">loss_val</span><span style="color:#000;-webkit-text-stroke:1.3px #000">, </span><span style="color:#000;-webkit-text-stroke:1.3px #000">variables</span><span style="color:#000;-webkit-text-stroke:1.3px #000">)</span>
 
<span style="color:#000;-webkit-text-stroke:1.3px #000">    </span><span style="color:#000;-webkit-text-stroke:1.3px #000">optimizer</span><span style="color:#000;-webkit-text-stroke:1.3px #000">.</span><span style="color:#000;-webkit-text-stroke:1.3px #000">apply_gradients</span><span style="color:#000;-webkit-text-stroke:1.3px #000">(</span><span style="color:#0000ff;-webkit-text-stroke:1.3px #0000ff">zip</span><span style="color:#000;-webkit-text-stroke:1.3px #000">(</span><span style="color:#000;-webkit-text-stroke:1.3px #000">grads</span><span style="color:#000;-webkit-text-stroke:1.3px #000">, </span><span style="color:#000;-webkit-text-stroke:1.3px #000">variables</span><span style="color:#000;-webkit-text-stroke:1.3px #000">))</span>
 
<span style="color:#000;-webkit-text-stroke:1.3px #000">    </span><span style="color:#008000;-webkit-text-stroke:1.3px #008000"># Evaluation Step</span>
<span style="color:#000;-webkit-text-stroke:1.3px #000">    </span><span style="color:#000;-webkit-text-stroke:1.3px #000">y</span><span style="color:#000;-webkit-text-stroke:1.3px #000"> = </span><span style="color:#000;-webkit-text-stroke:1.3px #000">model</span><span style="color:#000;-webkit-text-stroke:1.3px #000">(</span><span style="color:#000;-webkit-text-stroke:1.3px #000">x_test</span><span style="color:#000;-webkit-text-stroke:1.3px #000">)</span>
<span style="color:#000;-webkit-text-stroke:1.3px #000">    </span><span style="color:#000;-webkit-text-stroke:1.3px #000">correct_prediction</span><span style="color:#000;-webkit-text-stroke:1.3px #000"> = </span><span style="color:#000;-webkit-text-stroke:1.3px #000">tf</span><span style="color:#000;-webkit-text-stroke:1.3px #000">.</span><span style="color:#000;-webkit-text-stroke:1.3px #000">equal</span><span style="color:#000;-webkit-text-stroke:1.3px #000">(</span><span style="color:#000;-webkit-text-stroke:1.3px #000">tf</span><span style="color:#000;-webkit-text-stroke:1.3px #000">.</span><span style="color:#000;-webkit-text-stroke:1.3px #000">argmax</span><span style="color:#000;-webkit-text-stroke:1.3px #000">(</span><span style="color:#000;-webkit-text-stroke:1.3px #000">y</span><span style="color:#000;-webkit-text-stroke:1.3px #000">, </span><span style="color:#098658;-webkit-text-stroke:1.3px #098658">1</span><span style="color:#000;-webkit-text-stroke:1.3px #000">), </span><span style="color:#000;-webkit-text-stroke:1.3px #000">tf</span><span style="color:#000;-webkit-text-stroke:1.3px #000">.</span><span style="color:#000;-webkit-text-stroke:1.3px #000">argmax</span><span style="color:#000;-webkit-text-stroke:1.3px #000">(</span><span style="color:#000;-webkit-text-stroke:1.3px #000">y_test</span><span style="color:#000;-webkit-text-stroke:1.3px #000">, </span><span style="color:#098658;-webkit-text-stroke:1.3px #098658">1</span><span style="color:#000;-webkit-text-stroke:1.3px #000">))</span>
<span style="color:#000;-webkit-text-stroke:1.3px #000">    </span><span style="color:#000;-webkit-text-stroke:1.3px #000">accuracy</span><span style="color:#000;-webkit-text-stroke:1.3px #000"> = </span><span style="color:#000;-webkit-text-stroke:1.3px #000">tf</span><span style="color:#000;-webkit-text-stroke:1.3px #000">.</span><span style="color:#000;-webkit-text-stroke:1.3px #000">reduce_mean</span><span style="color:#000;-webkit-text-stroke:1.3px #000">(</span><span style="color:#000;-webkit-text-stroke:1.3px #000">tf</span><span style="color:#000;-webkit-text-stroke:1.3px #000">.</span><span style="color:#000;-webkit-text-stroke:1.3px #000">cast</span><span style="color:#000;-webkit-text-stroke:1.3px #000">(</span><span style="color:#000;-webkit-text-stroke:1.3px #000">correct_prediction</span><span style="color:#000;-webkit-text-stroke:1.3px #000">, </span><span style="color:#000;-webkit-text-stroke:1.3px #000">tf</span><span style="color:#000;-webkit-text-stroke:1.3px #000">.</span><span style="color:#000;-webkit-text-stroke:1.3px #000">float32</span><span style="color:#000;-webkit-text-stroke:1.3px #000">))</span>
<span style="color:#000;-webkit-text-stroke:1.3px #000">    </span><span style="color:#0000ff;-webkit-text-stroke:1.3px #0000ff">print</span><span style="color:#000;-webkit-text-stroke:1.3px #000">(</span><span style="color:#a31515;-webkit-text-stroke:1.3px #a31515">&quot;Accuracy at step %d: %s&quot;</span><span style="color:#000;-webkit-text-stroke:1.3px #000"> % (</span><span style="color:#000;-webkit-text-stroke:1.3px #000">i</span><span style="color:#000;-webkit-text-stroke:1.3px #000">, </span><span style="color:#000;-webkit-text-stroke:1.3px #000">accuracy</span><span style="color:#000;-webkit-text-stroke:1.3px #000">.</span><span style="color:#000;-webkit-text-stroke:1.3px #000">numpy</span><span style="color:#000;-webkit-text-stroke:1.3px #000">()))</span>
 </div>
</div>
<div style="position:absolute;left:1481.00px;top:1348.00px;width:1.50px;height:506.00px;background:#e6e6e6;"></div>
<div style="position:absolute;left:0.00px;top:1267.00px;width:1512.00px;height:81.50px;background:#fff;box-shadow:0 3px 5px rgba(0,0,0,.10)"></div>
<div style="position:absolute;left:0.00px;top:1346.50px;width:1512.00px;height:2.00px;background:#dadada;"></div>
<div class="t" style="left:13.70px;top:1298.55px;font-size:22px;font-family:'Liberation Mono',monospace;font-weight:700;color:#212121;">Source Code</div>
<div style="position:absolute;left:200px;top:1275px;width:1270px;height:58.7px;overflow:hidden">
<div class="t" style="left:2.70px;top:24.15px;font-size:22px;font-family:'Liberation Mono',monospace;font-weight:400;color:#212121;">/home/cais/venv_tf_nightly/lib/python3.7/site-</div>
<div class="t" style="left:2.70px;top:52.65px;font-size:22px;font-family:'Liberation Mono',monospace;font-weight:400;color:#212121;">packages/tensorflow/python/debug/examples/v2/debug_mnist_v2.py</div>
</div>
<div style="position:absolute;left:1482.00px;top:1281.00px;width:30.00px;height:53.00px;background:#f0f0f0;border-radius:2px"></div>
<svg style="position:absolute;left:1489px;top:1290px" width="16" height="9"><polygon points="0,8.5 8,0.5 16,8.5" fill="#a8a8a8"/></svg>
<div style="position:absolute;left:1484.00px;top:1307.00px;width:26.00px;height:1.30px;background:#d0d0d0;"></div>
<svg style="position:absolute;left:1489px;top:1316px" width="16" height="9"><polygon points="0,0.5 8,8.5 16,0.5" fill="#505050"/></svg>
<div style="position:absolute;left:1550px;top:1408px;width:1120px;height:446px;overflow:hidden">
<div style="position:absolute;left:0.00px;top:79.00px;width:1120.00px;height:65.00px;background:#ffd2ae;"></div>
<div style="position:absolute;left:0.00px;top:16.40px;width:1120.00px;height:2.00px;background:#9e9e9e;"></div>
<div style="position:absolute;left:0.00px;top:77.00px;width:1120.00px;height:2.00px;background:#9e9e9e;"></div>
<div style="position:absolute;left:0.00px;top:143.00px;width:1120.00px;height:2.00px;background:#9e9e9e;"></div>
<div style="position:absolute;left:0.00px;top:204.00px;width:1120.00px;height:2.00px;background:#9e9e9e;"></div>
<div style="position:absolute;left:0.00px;top:264.00px;width:1120.00px;height:2.00px;background:#9e9e9e;"></div>
<div style="position:absolute;left:0.00px;top:324.00px;width:1120.00px;height:2.00px;background:#9e9e9e;"></div>
<div style="position:absolute;left:0.00px;top:384.00px;width:1120.00px;height:2.00px;background:#9e9e9e;"></div>
<div style="position:absolute;left:0.00px;top:444.00px;width:1120.00px;height:2.00px;background:#9e9e9e;"></div>
<div class="t" style="left:482.00px;top:4.15px;font-size:22px;font-family:'Liberation Mono',monospace;font-weight:400;color:#212121;text-decoration:underline;text-decoration-thickness:2px;text-underline-offset:3px;">Line 600</div>
<div class="t" style="left:680.70px;top:4.15px;font-size:22px;font-family:'Liberation Mono',monospace;font-weight:400;color:#212121;">wrapped_fn</div>
<div class="t" style="left:0.00px;top:35.85px;font-size:22px;font-family:'Liberation Mono',monospace;font-weight:400;color:#212121;">func_graph.py</div>
<div class="t" style="left:482.00px;top:63.65px;font-size:22px;font-family:'Liberation Mono',monospace;font-weight:400;color:#212121;text-decoration:underline;text-decoration-thickness:2px;text-underline-offset:3px;">Line 969</div>
<div class="t" style="left:680.70px;top:63.65px;font-size:22px;font-family:'Liberation Mono',monospace;font-weight:400;color:#212121;">wrapper</div>
<div class="t" style="left:0.00px;top:95.85px;font-size:22px;font-family:'Liberation Mono',monospace;font-weight:700;color:#212121;">debug_mnist_v2.py</div>
<div class="t" style="left:482.00px;top:129.65px;font-size:22px;font-family:'Liberation Mono',monospace;font-weight:700;color:#212121;text-decoration:underline;text-decoration-thickness:2px;text-underline-offset:3px;">Line 216</div>
<div class="t" style="left:680.70px;top:129.65px;font-size:22px;font-family:'Liberation Mono',monospace;font-weight:700;color:#212121;">loss</div>
<div class="t" style="left:456.00px;top:129.11px;font-size:24px;font-family:'Liberation Mono',monospace;font-weight:700;color:#212121;">⤓</div>
<div class="t" style="left:0.00px;top:161.85px;font-size:22px;font-family:'Liberation Mono',monospace;font-weight:400;color:#212121;">gen_math_ops.py</div>
<div class="t" style="left:482.00px;top:189.65px;font-size:22px;font-family:'Liberation Mono',monospace;font-weight:400;color:#212121;text-decoration:underline;text-decoration-thickness:2px;text-underline-offset:3px;">Line 5264</div>
<div class="t" style="left:680.70px;top:189.65px;font-size:22px;font-family:'Liberation Mono',monospace;font-weight:400;color:#212121;">log</div>
<div class="t" style="left:0.00px;top:222.85px;font-size:22px;font-family:'Liberation Mono',monospace;font-weight:400;color:#212121;">op_def_library.py</div>
<div class="t" style="left:482.00px;top:250.65px;font-size:22px;font-family:'Liberation Mono',monospace;font-weight:400;color:#212121;text-decoration:underline;text-decoration-thickness:2px;text-underline-offset:3px;">Line 755</div>
<div class="t" style="left:680.70px;top:250.65px;font-size:22px;font-family:'Liberation Mono',monospace;font-weight:400;color:#212121;">_apply_op_helper</div>
<div class="t" style="left:0.00px;top:282.85px;font-size:22px;font-family:'Liberation Mono',monospace;font-weight:400;color:#212121;">op_callbacks.py</div>
<div class="t" style="left:482.00px;top:310.65px;font-size:22px;font-family:'Liberation Mono',monospace;font-weight:400;color:#212121;text-decoration:underline;text-decoration-thickness:2px;text-underline-offset:3px;">Line 208</div>
<div class="t" style="left:680.70px;top:310.65px;font-size:22px;font-family:'Liberation Mono',monospace;font-weight:400;color:#212121;">invoke_op_callbacks</div>
<div class="t" style="left:0.00px;top:342.85px;font-size:22px;font-family:'Liberation Mono',monospace;font-weight:400;color:#212121;">dumping_callback.py</div>
<div class="t" style="left:482.00px;top:370.65px;font-size:22px;font-family:'Liberation Mono',monospace;font-weight:400;color:#212121;text-decoration:underline;text-decoration-thickness:2px;text-underline-offset:3px;">Line 577</div>
<div class="t" style="left:680.70px;top:370.65px;font-size:22px;font-family:'Liberation Mono',monospace;font-weight:400;color:#212121;">callback</div>
<div class="t" style="left:0.00px;top:402.85px;font-size:22px;font-family:'Liberation Mono',monospace;font-weight:400;color:#212121;">dumping_callback.py</div>
<div class="t" style="left:482.00px;top:430.65px;font-size:22px;font-family:'Liberation Mono',monospace;font-weight:400;color:#212121;text-decoration:underline;text-decoration-thickness:2px;text-underline-offset:3px;">Line 258</div>
<div class="t" style="left:680.70px;top:430.65px;font-size:22px;font-family:'Liberation Mono',monospace;font-weight:400;color:#212121;">_process_stack_frames</div>
</div>
<div style="position:absolute;left:2670.00px;top:1408.00px;width:30.00px;height:446.00px;background:#f1f1f1;"></div>
<svg style="position:absolute;left:2677px;top:1419px" width="16" height="10"><polygon points="0,9 8,0.5 16,9" fill="#505050"/></svg>
<svg style="position:absolute;left:2677px;top:1834px" width="16" height="10"><polygon points="0,0.5 8,9 16,0.5" fill="#505050"/></svg>
<div style="position:absolute;left:2672.00px;top:1691.80px;width:25.60px;height:132.20px;background:#c1c1c1;"></div>
<div style="position:absolute;left:1532.00px;top:1267.00px;width:1168.00px;height:141.00px;background:#fff;"></div>
<div style="position:absolute;left:1550.00px;top:1400.00px;width:1120.00px;height:8.00px;background:#fff;box-shadow:0 4px 7px rgba(0,0,0,.2)"></div>
<div class="t" style="left:1550.30px;top:1297.85px;font-size:22px;font-family:'Liberation Mono',monospace;font-weight:700;color:#212121;">Stack Trace</div>
<div class="t" style="left:1602.60px;top:1359.85px;font-size:22px;font-family:'Liberation Mono',monospace;font-weight:400;color:#212121;">Creation of graph op &quot;Log&quot;</div>
<div style="position:absolute;left:1959.8px;top:1339px;width:51.9px;height:32.3px;background:#e3e5e8;border:2px solid #c2c2c2;border-radius:8px"></div>
<div class="t" style="left:1967.50px;top:1361.15px;font-size:22px;font-family:'Liberation Mono',monospace;font-weight:400;color:#212121;">Log</div>
<div class="t" style="left:1602.60px;top:1389.55px;font-size:22px;font-family:'Liberation Mono',monospace;font-weight:400;color:#757575;">(Host name: cais)</div></body></html>
